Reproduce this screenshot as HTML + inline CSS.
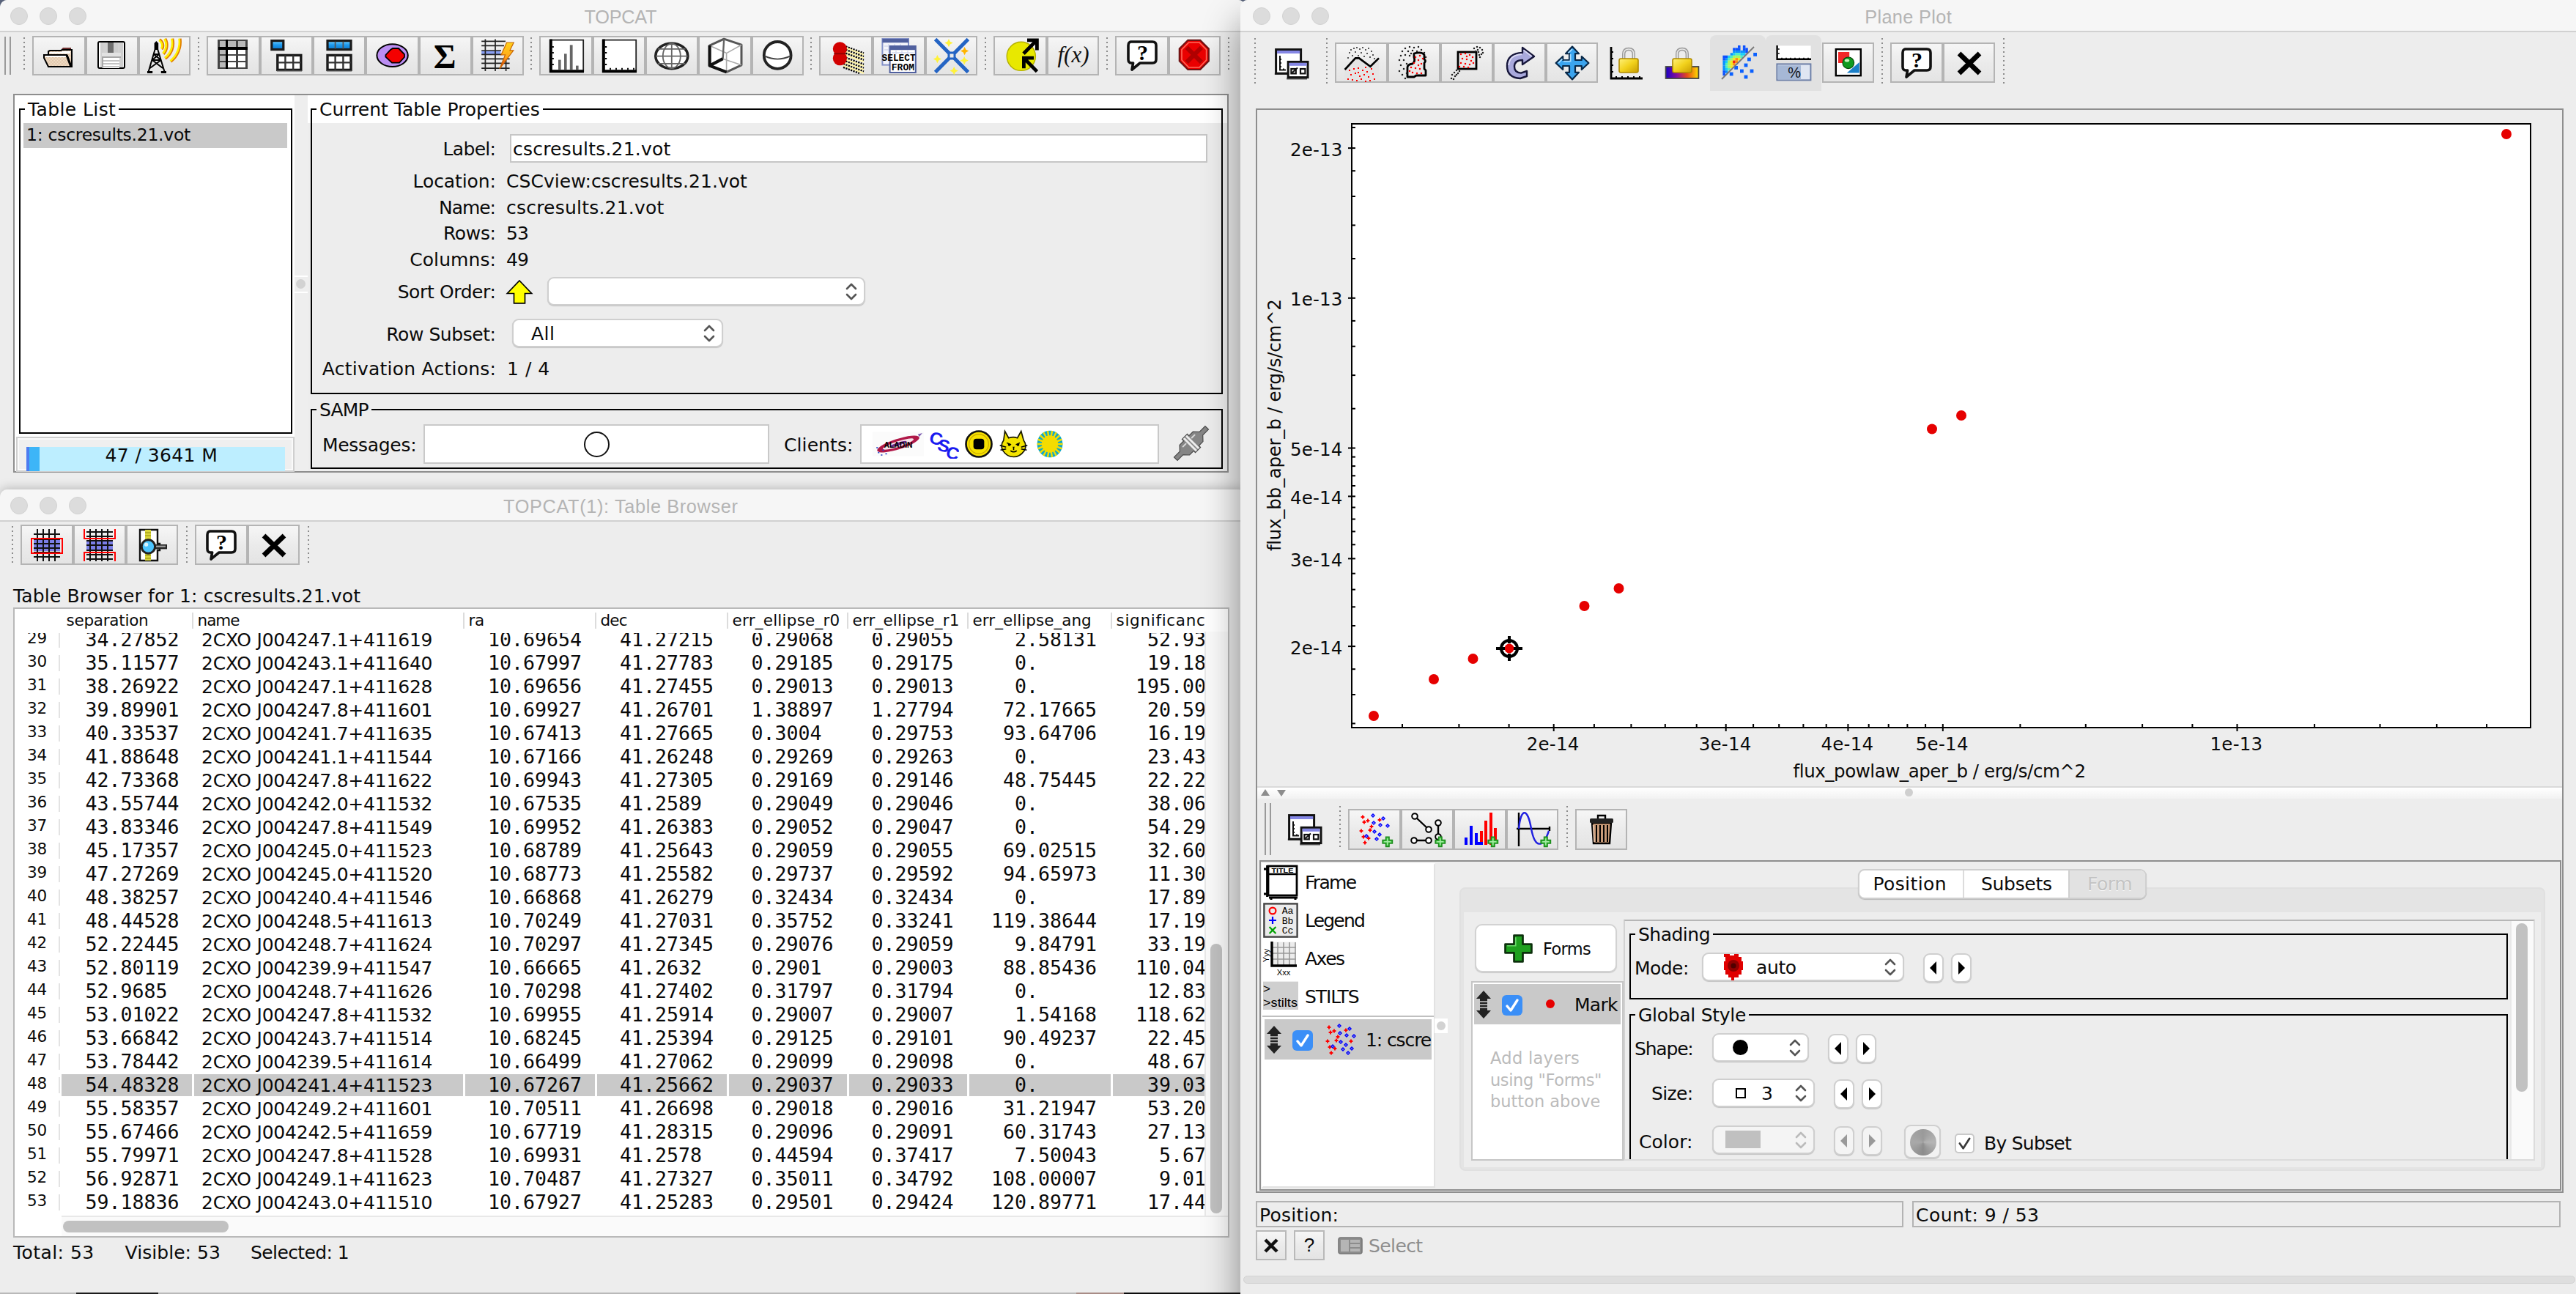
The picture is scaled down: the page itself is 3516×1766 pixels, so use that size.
<!DOCTYPE html><html><head><meta charset='utf-8'><title>TOPCAT</title><style>
*{box-sizing:border-box;margin:0;padding:0}
html,body{width:3516px;height:1766px;background:#59637b}
#root{position:relative;width:3516px;height:1766px;overflow:hidden;background:#59637b;font-family:'DejaVu Sans','Liberation Sans',sans-serif;font-size:25px;color:#0a0a0a}
.a{position:absolute}
.t{position:absolute;white-space:pre;line-height:1}
.win{position:absolute;background:#ededed;overflow:hidden;border-radius:10px 10px 0 0}
.tb{position:absolute;left:0;top:0;right:0;height:44px;background:#f6f6f6;border-bottom:2px solid #d1d1d1}
.tl{position:absolute;width:24px;height:24px;border-radius:50%;background:#dcdcdc;border:1px solid #d2d2d2;top:10px}
.ttl{position:absolute;top:2px;height:42px;line-height:42px;font-family:'Liberation Sans','DejaVu Sans',sans-serif;font-size:25.3px;color:#b4b4b4;text-align:center;white-space:pre}
.btn{position:absolute;border:2px solid #b4b4b4;background:linear-gradient(#f6f6f6,#ebebeb 50%,#e4e4e4)}
.btn svg,.ico svg{position:absolute;left:50%;top:50%;width:48px;height:48px;margin:-24px 0 0 -24px;overflow:visible}
.ico{position:absolute}
.sep{position:absolute;width:2px;background:repeating-linear-gradient(#8c8c8c 0 2px,transparent 2px 6px)}
.grip{position:absolute;width:9px;border-left:2px solid #9a9a9a;border-right:2px solid #9a9a9a}
.grp{position:absolute;border:2px solid #000}
.grp>.gt{position:absolute;left:9px;top:-22px;padding:0 4px;font-size:26px;line-height:36px;white-space:pre}
.lbl{position:absolute;white-space:pre;text-align:right;line-height:32px;height:32px}
.combo{position:absolute;background:#fff;border:2px solid #cfcfcf;border-radius:9px;box-shadow:0 1px 1px rgba(0,0,0,.18)}
.combo .ar{position:absolute;right:8px;top:50%;width:18px;height:28px;margin-top:-14px}
.mono{font-family:'DejaVu Sans Mono','Liberation Mono',monospace;font-size:26.58px}
.mac{font-family:'Liberation Sans','DejaVu Sans',sans-serif}
.sm{position:absolute;background:#fff;border:2px solid #cfcfcf;border-radius:9px;box-shadow:0 1px 1px rgba(0,0,0,.18)}
</style></head><body><div id='root'>
<div class='win' style='left:0;top:0;width:1700px;height:700px'>
<div class='tb'><div class='tl' style='left:14px'></div><div class='tl' style='left:54px'></div><div class='tl' style='left:94px'></div><div class='ttl' style='left:0;width:1694px;letter-spacing:-0.294px;text-indent:-0.294px'>TOPCAT</div></div>
<div class='grip' style='left:6px;top:50px;height:52px'></div>
<div class='sep' style='left:32px;top:51px;height:46px'></div>
<div class='btn' style='left:44px;top:49px;width:73px;height:54px'><svg viewBox='0 0 24 24' ><defs><pattern id='chk' width='1' height='1' patternUnits='userSpaceOnUse'><rect width='1' height='1' fill='#f4e2cc'/><rect width='.5' height='.5' fill='#dcc0a4'/><rect x='.5' y='.5' width='.5' height='.5' fill='#dcc0a4'/></pattern></defs><path d='M13.5 7.5 L14.5 6.5 H20 V8 H13.5Z' fill='#6e2f2f'/><path d='M4.5 10.5 V9 L5.5 8.5 H13 L14 8 H20.5 V19.5 H4.5Z' fill='url(#chk)' stroke='#000' stroke-width='1'/><path d='M5.5 9.5 H13 L14 9 H19.5 V10.5 H5.5Z' fill='#fff'/><path d='M1.5 11.5 H17 L20 19.5 H4.5 L1.5 13.5Z' fill='url(#chk)' stroke='#000' stroke-width='1'/><path d='M2.5 12.5 H16.5' stroke='#fff' stroke-width='1'/><path d='M17 11.5 L20 19.5' stroke='#000' stroke-width='1.6'/></svg></div>
<div class='btn' style='left:117px;top:49px;width:72px;height:54px'><svg viewBox='0 0 24 24' ><rect x='2.5' y='2.5' width='18' height='18' rx='1' fill='#fff' stroke='#000' stroke-width='1'/><rect x='4' y='3' width='2' height='17' fill='#cfcfcf'/><rect x='17' y='3' width='2.5' height='17' fill='#cfcfcf'/><rect x='6' y='3' width='11' height='7' fill='#d2d2d2'/><rect x='9' y='3' width='4' height='7' fill='#6e6e6e'/><rect x='13' y='3.5' width='3' height='6' fill='#cdcdcd'/><rect x='5' y='10' width='13' height='2.5' fill='#e2e2e2'/><rect x='5' y='12.5' width='13' height='1' fill='#a8a8a8'/><rect x='6' y='13.5' width='11' height='7' fill='#fff'/><path d='M6 15.5H17M6 17.5H17M6 19.5H17' stroke='#c4c4c4' stroke-width='1'/><rect x='5' y='13.5' width='1' height='7' fill='#a8a8a8'/></svg></div>
<div class='btn' style='left:189px;top:49px;width:71px;height:54px'><svg viewBox='0 0 24 24' ><path d='M6.2 2 L7.6 3.5 V8 H4.8 V3.5Z' fill='#000'/><path d='M5.2 8 L0.8 23 M7.2 8 L11.8 23 M4.4 11 H8 M3.4 15 L9.4 15 M4.4 11 L9.4 15 M8 11 L3.4 15 M3.4 15 L10.6 20.5 M9.4 15 L1.8 20.5 M0 23.5 H3.5 M9.5 23.5 H13' fill='none' stroke='#000' stroke-width='1'/><path d='M0 22.5H3.6V24H0Z M9.4 22.5H13V24H9.4Z' fill='#000'/><g fill='none' stroke-width='1.3'><path d='M8.5 0.8 A5 5 0 0 1 10.2 7.8' stroke='#e07b00'/><path d='M8 1.4 A4.2 4.2 0 0 1 9.6 7.2' stroke='#ffee00'/><path d='M12.5 0.3 A9 9 0 0 1 11.2 11' stroke='#e07b00'/><path d='M11.7 0.5 A8.2 8.2 0 0 1 10.6 10.4' stroke='#ffee00'/><path d='M17.5 0.3 A13 13 0 0 1 12.4 14.2' stroke='#e07b00'/><path d='M16.6 0.3 A12.2 12.2 0 0 1 11.9 13.5' stroke='#ffee00'/><path d='M22.7 0.3 A17.5 17.5 0 0 1 16.2 16.2' stroke='#e07b00'/><path d='M21.8 0.3 A16.7 16.7 0 0 1 15.7 15.6' stroke='#ffee00'/></g></svg></div>
<div class='btn' style='left:282px;top:49px;width:73px;height:54px'><svg viewBox='0 0 24 24' shape-rendering='crispEdges'><g transform='translate(-0.7 -1)'><rect x='2' y='2' width='20' height='20' fill='#fff'/><rect x='2' y='2' width='20' height='6' fill='#b9b9b9'/><rect x='2' y='2' width='6' height='20' fill='#b9b9b9'/><path d='M2.5 2.5H21.5V21.5H2.5Z M2.5 12.5H21.5 M2.5 17H21.5 M15 2.5V21.5' fill='none' stroke='#444' stroke-width='1.2'/><path d='M2 8H22 M8 2V22' stroke='#000' stroke-width='1.8'/></g></svg></div>
<div class='btn' style='left:355px;top:49px;width:72px;height:54px'><svg viewBox='0 0 24 24' ><defs><linearGradient id='bl' x1='0' y1='0' x2='0' y2='1'><stop offset='0' stop-color='#7ad0ff'/><stop offset='.45' stop-color='#1e9cf0'/><stop offset='1' stop-color='#0a74c8'/></linearGradient></defs><rect x='1.9' y='1.8' width='8' height='6' fill='url(#bl)' stroke='#1a1a1a' stroke-width='1.6'/><rect x='5.9' y='11.7' width='16' height='10' fill='#fff' stroke='#1a1a1a' stroke-width='1.7'/><path d='M5.9 16.7H22 M11.2 11.7V21.7 M16.6 11.7V21.7' stroke='#333' stroke-width='1.2'/><path d='M5.5 22.6H22.5' stroke='#888' stroke-width='0.6'/></svg></div>
<div class='btn' style='left:427px;top:49px;width:72px;height:54px'><svg viewBox='0 0 24 24' ><rect x='4' y='1.8' width='16' height='6' fill='url(#bl)' stroke='#1a1a1a' stroke-width='1.6'/><path d='M9.3 2.4V7.2 M14.7 2.4V7.2' stroke='#555' stroke-width='0.9'/><rect x='4' y='11.7' width='16' height='10' fill='#fff' stroke='#1a1a1a' stroke-width='1.7'/><path d='M4 16.7H20 M9.3 11.7V21.7 M14.7 11.7V21.7' stroke='#333' stroke-width='1.2'/><path d='M3.6 22.6H20.5' stroke='#888' stroke-width='0.6'/></svg></div>
<div class='btn' style='left:499px;top:49px;width:73px;height:54px'><svg viewBox='0 0 24 24' ><ellipse cx='11.8' cy='11.8' rx='10.6' ry='7.7' fill='#bb8ef2' stroke='#000' stroke-width='1'/><path d='M7.2 11.5 L10.5 8 L12 7 H16 L20 11 V13 L16.5 16.8 H11.5 L7.2 12.8 Z' fill='#f40000' stroke='#000' stroke-width='0.9'/></svg></div>
<div class='btn' style='left:572px;top:49px;width:72px;height:54px'><svg viewBox='0 0 24 24' ><text x='11.6' y='20.6' text-anchor='middle' font-family="'Liberation Serif','DejaVu Serif',serif" font-weight='bold' font-size='23.5' fill='#000'>Σ</text></svg></div>
<div class='btn' style='left:644px;top:49px;width:71px;height:54px'><svg viewBox='0 0 24 24' ><rect x='0.6' y='8.6' width='13' height='2.5' fill='#8aa0f4'/><path d='M3.2 0.8V22.5 M10 0.8V22.5 M17.3 12V22.5 M0.6 2.2H17 M0.6 5.2H16 M0.6 8.5H14 M0.6 11.2H14 M0.6 14.2H19.8 M0.6 17.2H19.8 M0.6 20.6H19.8' stroke='#222' stroke-width='0.85' fill='none'/><defs><linearGradient id='lt' x1='0' y1='0' x2='0' y2='1'><stop offset='0' stop-color='#ffd21a'/><stop offset='.55' stop-color='#ffa81a'/><stop offset='1' stop-color='#d81a0a'/></linearGradient></defs><path d='M17.8 3 L22.6 3 L20 8.4 L22.4 8.4 L13 21 L16.8 11.4 L14 11.4 Z' fill='url(#lt)' stroke='#c86400' stroke-width='0.6'/></svg></div>
<div class='btn' style='left:736px;top:49px;width:73px;height:54px'><svg viewBox='0 0 24 24' ><rect x='1.5' y='1.5' width='22' height='21' fill='#fff'/><path d='M1 1.3H23.6V23' fill='none' stroke='#222' stroke-width='0.9'/><path d='M1.4 0.8V22.6H24' fill='none' stroke='#000' stroke-width='2'/><path d='M2.4 6H3.4M2.4 10H3.4M2.4 14H3.4M2.4 18H3.4' stroke='#000' stroke-width='0.9'/><rect x='6.5' y='14.8' width='1.8' height='6.8' fill='#666'/><rect x='10.5' y='10.7' width='1.8' height='10.9' fill='#666'/><rect x='14.4' y='4.7' width='1.9' height='16.9' fill='#666'/><rect x='18.5' y='18.8' width='1.8' height='2.8' fill='#666'/></svg></div>
<div class='btn' style='left:809px;top:49px;width:72px;height:54px'><svg viewBox='0 0 24 24' ><rect x='1.5' y='1.5' width='22' height='21' fill='#fff'/><path d='M1 1.3H23.6V23' fill='none' stroke='#222' stroke-width='0.9'/><path d='M1.4 0.8V22.6H24' fill='none' stroke='#000' stroke-width='2'/><path d='M2.4 6H3.6M2.4 10H3.6M2.4 14H3.6M2.4 18H3.6M6 21.6V20.4M10 21.6V20.4M14 21.6V20.4M18 21.6V20.4M22 21.6V20.4' stroke='#000' stroke-width='0.9'/></svg></div>
<div class='btn' style='left:881px;top:49px;width:72px;height:54px'><svg viewBox='0 0 24 24' ><ellipse cx='11.9' cy='12.2' rx='11' ry='8.6' fill='#fff' stroke='#222' stroke-width='1.8'/><path d='M11.9 3.6V20.8 M1 12.3H22.8 M2.6 7.4H21.2 M2.6 17.4H21.2' stroke='#666' stroke-width='0.9' fill='none'/><ellipse cx='11.9' cy='12.2' rx='6' ry='8.4' fill='none' stroke='#666' stroke-width='0.9'/></svg></div>
<div class='btn' style='left:953px;top:49px;width:73px;height:54px'><svg viewBox='0 0 24 24' ><path d='M11.1 0.6 L23 4.6 V18.4 L12.8 23.2 L1.3 18.8 V5.1 Z' fill='#fff' stroke='#555' stroke-width='1.5' stroke-linejoin='round'/><path d='M12.8 10.3 L1.3 5.1 M12.8 10.3 L23 4.6 M12.8 10.3 V23.2 M10.3 14.1 L23 18.4' fill='none' stroke='#aaa' stroke-width='0.8'/><path d='M11.1 0.6 L10.3 14.1' fill='none' stroke='#666' stroke-width='1.2'/><path d='M1.3 5 V18.8 L12.8 23.2 M1.3 18.8 L10.3 14.1' fill='none' stroke='#111' stroke-width='2.1' stroke-linejoin='round'/></svg></div>
<div class='btn' style='left:1026px;top:49px;width:71px;height:54px'><svg viewBox='0 0 24 24' ><circle cx='11.6' cy='11.7' r='9.2' fill='#fff' stroke='#222' stroke-width='1.9'/><path d='M2.8 12.2 Q11.6 16.4 20.4 12.2' fill='none' stroke='#444' stroke-width='0.9'/></svg></div>
<div class='btn' style='left:1118px;top:49px;width:73px;height:54px'><svg viewBox='0 0 24 24' ><g stroke-width='1.15' fill='none'><path d='M10 6.1 L24 11.3 M10 8.5 L24 13.7 M10 10.9 L24 16.1' stroke='#fff4a8'/><path d='M10 13.9 L24 19.1 M10 16.3 L24 21.5 M10 18.7 L24 23.9' stroke='#fff4a8'/><path d='M10 7.3 L24 12.5 M10 9.7 L24 14.9 M10 5 L24 10.2' stroke='#000' stroke-dasharray='1.1 0.7'/><path d='M10 15.1 L24 20.3 M10 17.5 L24 22.7 M10 12.7 L24 17.9 M10 19.9 L21 24' stroke='#000' stroke-dasharray='1.1 0.7'/></g><circle cx='7.7' cy='7.4' r='4.8' fill='#d20000'/><circle cx='7.7' cy='13.8' r='4.8' fill='#d20000'/><rect x='3.6' y='10.2' width='8' height='0.9' fill='#900000'/></svg></div>
<div class='btn' style='left:1191px;top:49px;width:72px;height:54px'><svg viewBox='0 0 24 24' ><rect x='0.7' y='0.5' width='17.8' height='17.8' fill='#f4f5fb' stroke='#8492c8' stroke-width='1'/><rect x='0.7' y='0.5' width='17.8' height='2.6' fill='#50609e'/><path d='M2 5.5H17M2 8H17M5 4V10M9 4V10M13 4V10' stroke='#d4d9ee' stroke-width='0.7'/><rect x='5.8' y='5.5' width='17.6' height='18' fill='#fff' stroke='#50609e' stroke-width='1'/><rect x='5.8' y='5.5' width='17.6' height='2.6' fill='#50609e'/><path d='M7 10H22M10 8.5V11M14 8.5V11M18 8.5V11' stroke='#d4d9ee' stroke-width='0.7'/><text x='0.3' y='15.3' font-family="'Liberation Mono','DejaVu Sans Mono',monospace" font-weight='bold' font-size='6.4' textLength='23' lengthAdjust='spacingAndGlyphs' fill='#000'>SELECT</text><text x='6.9' y='21.8' font-family="'Liberation Mono','DejaVu Sans Mono',monospace" font-weight='bold' font-size='6.4' textLength='15.6' lengthAdjust='spacingAndGlyphs' fill='#000'>FROM</text></svg></div>
<div class='btn' style='left:1263px;top:49px;width:71px;height:54px'><svg viewBox='0 0 24 24' ><g fill='#fff23a'><path d='M10 0.5l.9 1.9 1.9.9-1.9.9-.9 1.9-.9-1.9-1.9-.9 1.9-.9z M2.2 11.5l.9 1.9 1.9.9-1.9.9-.9 1.9-.9-1.9-1.9-.9 1.9-.9z M20.6 12.5l.9 1.9 1.9.9-1.9.9-.9 1.9-.9-1.9-1.9-.9 1.9-.9z M13.6 19.5l.9 1.9 1.9.9-1.9.9-.9 1.9-.9-1.9-1.9-.9 1.9-.9z'/></g><path d='M20.8 6l.9 1.9 1.9.9-1.9.9-.9 1.9-.9-1.9-1.9-.9 1.9-.9z' fill='#ffb400'/><path d='M0.8 0.8 L10.2 10.2 M13.8 13.8 L23.2 23.2 M23.2 0.8 L13.8 10.2 M10.2 13.8 L0.8 23.2' fill='none' stroke='#2464c4' stroke-width='2.5'/><rect x='10' y='10' width='4' height='4' fill='none' stroke='#2464c4' stroke-width='1.5'/></svg></div>
<div class='btn' style='left:1356px;top:49px;width:73px;height:54px'><svg viewBox='0 0 24 24' ><circle cx='12.4' cy='12.4' r='9.8' fill='#e8e800' stroke='#b4b000' stroke-width='0.7'/><path d='M14 10.6 L22.5 2 M16.5 1.4 H23.2 V8.2' fill='none' stroke='#000' stroke-width='2.4'/><path d='M23.2 22.8 L15 14.4 M14.2 20.6 V13.6 H21' fill='none' stroke='#000' stroke-width='2.4'/></svg></div>
<div class='btn' style='left:1429px;top:49px;width:71px;height:54px'><svg viewBox='0 0 24 24' ><text x='12' y='16.5' text-anchor='middle' font-family="'Liberation Serif','DejaVu Serif',serif" font-style='italic' font-size='15.5' fill='#111'>f(x)</text></svg></div>
<div class='btn' style='left:1522px;top:49px;width:73px;height:54px'><svg viewBox='0 0 24 24' ><path d='M4 2.5 H19 Q21.5 2.5 21.5 5 V14.5 Q21.5 17 19 17 H10.5 L5 21.5 L5.8 17 H4.5 Q2.5 17 2.5 14.5 V5 Q2.5 2.5 4.5 2.5Z' fill='#fff' stroke='#111' stroke-width='1.8' stroke-linejoin='round'/><text x='12.2' y='15' text-anchor='middle' font-family="'Liberation Serif','DejaVu Serif',serif" font-weight='bold' font-size='15' fill='#000'>?</text></svg></div>
<div class='btn' style='left:1595px;top:49px;width:71px;height:54px'><svg viewBox='0 0 24 24' ><path d='M7.2 1.4 H15.6 L21.4 7.2 V15.6 L15.6 21.5 H7.2 L1.4 15.6 V7.2Z' fill='#ea0000' stroke='#6e1414' stroke-width='1.1'/><path d='M7.8 3H15L19.8 7.8V15L15 20H7.8L3 15V7.8Z' fill='none' stroke='#ff6a5a' stroke-width='0.8'/><path d='M6.4 6.4 L16.4 16.4 M16.4 6.4 L6.4 16.4' stroke='#b00000' stroke-width='3'/></svg></div>
<div class='sep' style='left:270px;top:51px;height:46px'></div>
<div class='sep' style='left:724px;top:51px;height:46px'></div>
<div class='sep' style='left:1106px;top:51px;height:46px'></div>
<div class='sep' style='left:1344px;top:51px;height:46px'></div>
<div class='sep' style='left:1510px;top:51px;height:46px'></div>
<div class='sep' style='left:1676px;top:51px;height:46px'></div>
<div class='a' style='left:18px;top:128px;width:1659px;height:517px;background:#fff;border:2px solid #8e8e8e'></div>
<div class='a' style='left:402px;top:130px;width:18px;height:513px;background:#eeeeee'></div>
<div class='a' style='left:404px;top:381px;width:13px;height:13px;border-radius:50%;background:#d2d2d2'></div>
<div class='a' style='left:402px;top:376px;width:18px;height:2px;background:#fff'></div><div class='a' style='left:402px;top:398px;width:18px;height:2px;background:#fff'></div>
<div class='grp' style='left:26px;top:148px;width:373px;height:444px'></div><div class='t' style='left:38px;top:137px;font-size:25px;letter-spacing:0.400px;background:#fff;padding:0 4px;margin-left:-4px;'>Table List</div>
<div class='a' style='left:32px;top:168px;width:360px;height:34px;background:#c9c9c9'></div>
<div class='t' style='left:36px;top:173px;font-size:23.5px;letter-spacing:-0.275px;'>1: cscresults.21.vot</div>
<div class='a' style='left:22px;top:596px;width:380px;height:48px;background:#efefef;border:2px solid #cfcfcf;box-shadow:inset 0 0 0 2px #fafafa'></div>
<div class='a' style='left:36px;top:610px;width:353px;height:33px;background:#bdeeff'></div>
<div class='a' style='left:36px;top:610px;width:18px;height:33px;background:#3db5f7'></div>
<div class='a' style='left:36px;top:610px;width:4px;height:33px;background:#4d7cf0'></div>
<div class='t' style='left:143.5px;top:609px;font-size:25px;letter-spacing:0.402px;'>47 / 3641 M</div>
<div class='a' style='left:420px;top:168px;width:1255px;height:475px;background:#ededed'></div>
<div class='grp' style='left:424px;top:148px;width:1245px;height:390px'></div><div class='t' style='left:436px;top:137px;font-size:25px;letter-spacing:-0.003px;background:#fff;padding:0 4px;margin-left:-4px;'>Current Table Properties</div>
<div class='a' style='left:696px;top:183px;width:952px;height:39px;background:#fff;border:2px solid #c6c6c6'></div>
<div class='t' style='right:calc(100% - 677px);top:191px;font-size:25px;letter-spacing:-0.696px;margin-right:0.696px;'>Label:</div>
<div class='t' style='left:700px;top:191px;font-size:25px;letter-spacing:0.213px;'>cscresults.21.vot</div>
<div class='t' style='right:calc(100% - 677px);top:235px;font-size:25px;letter-spacing:-0.086px;margin-right:0.086px;'>Location:</div>
<div class='t' style='left:691px;top:235px;font-size:25px;letter-spacing:0.069px;'>CSCview:cscresults.21.vot</div>
<div class='t' style='right:calc(100% - 677px);top:271px;font-size:25px;letter-spacing:-1.057px;margin-right:1.057px;'>Name:</div>
<div class='t' style='left:691px;top:271px;font-size:25px;letter-spacing:0.213px;'>cscresults.21.vot</div>
<div class='t' style='right:calc(100% - 677px);top:306px;font-size:25px;letter-spacing:-0.347px;margin-right:0.347px;'>Rows:</div>
<div class='t' style='left:691px;top:306px;font-size:25px;letter-spacing:-0.906px;'>53</div>
<div class='t' style='right:calc(100% - 677px);top:342px;font-size:25px;letter-spacing:0.089px;margin-right:-0.089px;'>Columns:</div>
<div class='t' style='left:691px;top:342px;font-size:25px;letter-spacing:-0.906px;'>49</div>
<div class='t' style='right:calc(100% - 677px);top:386px;font-size:25px;letter-spacing:-0.385px;margin-right:0.385px;'>Sort Order:</div>
<div class='a' style='left:689px;top:378px;width:40px;height:40px'><svg width='40' height='40' viewBox='0 0 24 24' ><path d='M12 3 L22 13.5 H16.5 V21.5 H7.5 V13.5 H2 Z' fill='#ffff00' stroke='#000' stroke-width='1' stroke-linejoin='miter'/></svg></div>
<div class='combo' style='left:747px;top:378px;width:434px;height:39px;background:#fff'><svg class='ar' viewBox='0 0 18 28'><path d='M3 10 L9 4 L15 10 M3 18 L9 24 L15 18' fill='none' stroke='#555' stroke-width='2.6' stroke-linecap='round' stroke-linejoin='round'/></svg></div>
<div class='t' style='right:calc(100% - 677px);top:444px;font-size:25px;letter-spacing:-0.441px;margin-right:0.441px;'>Row Subset:</div>
<div class='combo' style='left:699px;top:435px;width:288px;height:39px;background:#fff'><div class='t' style='left:24px;top:6px;font-size:25px;letter-spacing:0.500px;'>All</div><svg class='ar' viewBox='0 0 18 28'><path d='M3 10 L9 4 L15 10 M3 18 L9 24 L15 18' fill='none' stroke='#555' stroke-width='2.6' stroke-linecap='round' stroke-linejoin='round'/></svg></div>
<div class='t' style='right:calc(100% - 677px);top:491px;font-size:25px;letter-spacing:0.239px;margin-right:-0.239px;'>Activation Actions:</div>
<div class='t' style='left:692px;top:491px;font-size:25px;letter-spacing:0.532px;'>1 / 4</div>
<div class='grp' style='left:424px;top:558px;width:1245px;height:82px'></div><div class='t' style='left:436px;top:547px;font-size:25px;letter-spacing:-0.873px;background:#ededed;padding:0 4px;margin-left:-4px;'>SAMP</div>
<div class='t' style='left:440px;top:595px;font-size:25px;letter-spacing:-0.303px;'>Messages:</div>
<div class='a' style='left:578px;top:579px;width:472px;height:54px;background:#fff;border:2px solid #c9c9c9'></div>
<div class='a' style='left:797px;top:589px;width:35px;height:35px;border-radius:50%;border:2px solid #111'></div>
<div class='t' style='left:1070px;top:595px;font-size:25px;letter-spacing:0.096px;'>Clients:</div>
<div class='a' style='left:1174px;top:579px;width:408px;height:54px;background:#fff;border:2px solid #c9c9c9'></div>
<div class='a' style='left:1191px;top:586px;width:70px;height:40px'><svg width='70' height='40' preserveAspectRatio='none' viewBox='0 0 34 24'><rect x='0' y='2' width='34' height='20' fill='#fbfbfb'/><ellipse cx='17' cy='12' rx='15' ry='4.2' transform='rotate(-22 17 12)' fill='#b01848'/><ellipse cx='17' cy='12' rx='11' ry='2.2' transform='rotate(-22 17 12)' fill='#f6e4ea'/><ellipse cx='17' cy='12' rx='6' ry='1.2' transform='rotate(-22 17 12)' fill='#6a2a8a'/><path d='M30 4 L33 3 L31 6Z' fill='#7a5ab0'/><rect x='3.50' y='18.50' width='1.0' height='1.0' fill='#2a4ac8'/><rect x='5.50' y='20.50' width='1.0' height='1.0' fill='#2a4ac8'/><rect x='8.50' y='19.50' width='1.0' height='1.0' fill='#2a4ac8'/><rect x='2.50' y='14.50' width='1.0' height='1.0' fill='#2a4ac8'/><rect x='6.50' y='16.50' width='1.0' height='1.0' fill='#2a4ac8'/><text x='17' y='15.2' text-anchor='middle' font-family="'Liberation Sans','DejaVu Sans',sans-serif" font-weight='bold' font-size='6.2' textLength='19' lengthAdjust='spacingAndGlyphs' fill='#000'>ALADIN</text></svg></div>
<div class='a' style='left:1267px;top:586px;width:42px;height:40px'><svg width='42' height='40' preserveAspectRatio='none' viewBox='0 0 24 24' ><text x='0' y='11' font-family="'Liberation Sans','DejaVu Sans',sans-serif" font-weight='bold' font-size='14' fill='#1a1af0' transform='rotate(14 0 11)'>C</text><text x='6.5' y='17' font-family="'Liberation Sans','DejaVu Sans',sans-serif" font-weight='bold' font-size='14' fill='#1a1af0' transform='rotate(14 6.5 17)'>S</text><text x='13' y='23' font-family="'Liberation Sans','DejaVu Sans',sans-serif" font-weight='bold' font-size='14' fill='#1a1af0' transform='rotate(14 13 23)'>C</text></svg></div>
<div class='a' style='left:1316px;top:586px;width:40px;height:40px'><svg width='40' height='40' preserveAspectRatio='none' viewBox='0 0 24 24' ><circle cx='12' cy='12' r='10.5' fill='#f6e000' stroke='#111' stroke-width='1.6'/><rect x='7.6' y='7.6' width='8.8' height='8.8' rx='2.4' fill='#000'/><circle cx='12' cy='12' r='8' fill='none' stroke='#c8a800' stroke-width='0.7'/></svg></div>
<div class='a' style='left:1363px;top:586px;width:41px;height:40px'><svg width='41' height='40' preserveAspectRatio='none' viewBox='0 0 24 24' ><path d='M5 1.5 L8 7 Q12 5.8 15 7 L18 1.5 L20 9 Q23 13 20.5 17.5 Q17 22.5 12 22.5 Q6.5 22.5 3.5 17.5 Q1 13 4 9 Z' fill='#f4e400' stroke='#1a1a00' stroke-width='1'/><path d='M6.5 11 L10 12.5 M17 11 L13.8 12.5 M9.5 17.5 Q12 19.5 14.5 17.5 M12 15 V17 M1 13 L6 14.5 M1.5 17 L6 16 M23 13 L18 14.5 M22.5 17 L18 16' fill='none' stroke='#000' stroke-width='0.9'/><circle cx='8.5' cy='12.6' r='1.1' fill='#000'/><circle cx='15.5' cy='12.6' r='1.1' fill='#000'/><path d='M11 14.2h2l-1 1.3z' fill='#000'/></svg></div>
<div class='a' style='left:1414px;top:586px;width:38px;height:40px'><svg width='38' height='40' preserveAspectRatio='none' viewBox='0 0 24 24' ><circle cx='12' cy='12' r='11' fill='#10a8c8'/><path d='M12 12 L23.00 12.00' stroke='#f4dc00' stroke-width='1.5'/><path d='M12 12 L22.34 15.76' stroke='#f4dc00' stroke-width='1.5'/><path d='M12 12 L20.43 19.07' stroke='#f4dc00' stroke-width='1.5'/><path d='M12 12 L17.50 21.53' stroke='#f4dc00' stroke-width='1.5'/><path d='M12 12 L13.91 22.83' stroke='#f4dc00' stroke-width='1.5'/><path d='M12 12 L10.09 22.83' stroke='#f4dc00' stroke-width='1.5'/><path d='M12 12 L6.50 21.53' stroke='#f4dc00' stroke-width='1.5'/><path d='M12 12 L3.57 19.07' stroke='#f4dc00' stroke-width='1.5'/><path d='M12 12 L1.66 15.76' stroke='#f4dc00' stroke-width='1.5'/><path d='M12 12 L1.00 12.00' stroke='#f4dc00' stroke-width='1.5'/><path d='M12 12 L1.66 8.24' stroke='#f4dc00' stroke-width='1.5'/><path d='M12 12 L3.57 4.93' stroke='#f4dc00' stroke-width='1.5'/><path d='M12 12 L6.50 2.47' stroke='#f4dc00' stroke-width='1.5'/><path d='M12 12 L10.09 1.17' stroke='#f4dc00' stroke-width='1.5'/><path d='M12 12 L13.91 1.17' stroke='#f4dc00' stroke-width='1.5'/><path d='M12 12 L17.50 2.47' stroke='#f4dc00' stroke-width='1.5'/><path d='M12 12 L20.43 4.93' stroke='#f4dc00' stroke-width='1.5'/><path d='M12 12 L22.34 8.24' stroke='#f4dc00' stroke-width='1.5'/><circle cx='12' cy='12' r='7' fill='#f4dc00'/></svg></div>
<div class='ico' style='left:1602px;top:581px;width:48px;height:48px'><svg viewBox='0 0 24 24' ><g transform='rotate(-45 12 12)'><path d='M-3 10.4 H2.5 L5.5 7.2 H9.5 V5.6 H14.5 V7.2 H18.5 L21.5 10.4 H27 V13.6 H21.5 L18.5 16.8 H14.5 V18.4 H9.5 V16.8 H5.5 L2.5 13.6 H-3Z' fill='#858585' stroke='#4a4a4a' stroke-width='0.6'/><path d='M6 9.6H9.5M14.5 9.6H18' stroke='#d8d8d8' stroke-width='1'/><rect x='10.1' y='5.9' width='1.5' height='12.2' fill='#ececec'/><rect x='12.4' y='5.9' width='1.5' height='12.2' fill='#ececec'/></g></svg></div>
</div>
<div class='win' style='left:0;top:668px;width:1700px;height:1098px;box-shadow:0 -2px 14px rgba(0,0,0,.22)'>
<div class='tb'><div class='tl' style='left:14px'></div><div class='tl' style='left:54px'></div><div class='tl' style='left:94px'></div><div class='ttl' style='left:0;width:1694px;letter-spacing:0.643px;text-indent:0.643px'>TOPCAT(1): Table Browser</div></div>
<div class='sep' style='left:16px;top:50px;height:51px'></div>
<div class='btn' style='left:28px;top:48px;width:72px;height:55px'><svg viewBox='0 0 24 24' shape-rendering='crispEdges'><rect x='3' y='8.5' width='18' height='7.5' fill='#7b7fe8'/><path d='M5.5 1V23 M9.5 1V23 M13.5 1V23 M17.5 1V23 M3 4.5H21 M3 8H21 M3 11H21 M3 14H21 M3 17H21 M3 20H21' stroke='#111' stroke-width='0.9' fill='none'/><rect x='1.5' y='7.5' width='21' height='10' fill='none' stroke='#f00' stroke-width='1'/></svg></div>
<div class='btn' style='left:100px;top:48px;width:72px;height:55px'><svg viewBox='0 0 24 24' shape-rendering='crispEdges'><rect x='3' y='9' width='18' height='6.5' fill='#7b7fe8'/><path d='M5.5 1V23 M9.5 1V23 M13.5 1V23 M17.5 1V23 M3 3H21 M3 6H21 M3 9H21 M3 12H21 M3 15.5H21 M3 18.5H21 M3 21.5H21' stroke='#111' stroke-width='0.9' fill='none'/><path d='M1.5 1V7.5H22.5V1 M1.5 23V17H22.5V23' fill='none' stroke='#f00' stroke-width='1'/></svg></div>
<div class='btn' style='left:172px;top:48px;width:71px;height:55px'><svg viewBox='0 0 24 24' ><path d='M3.5 1.5 H15.5 V11 H17 V15.5 H15.5 V22.5 H3.5Z' fill='#fff' stroke='#111' stroke-width='1.2'/><rect x='7' y='1.5' width='4' height='7' fill='#d9d53a'/><rect x='7' y='17' width='4' height='5.5' fill='#d9d53a'/><path d='M7 3.5H11M7 5.5H11M7 19H11M7 21H11' stroke='#a8a41a' stroke-width='0.7'/><rect x='13' y='11.5' width='9' height='3.2' fill='#222'/><rect x='14' y='12.3' width='7' height='1.2' fill='#999'/><circle cx='9.2' cy='13' r='4.6' fill='#4cc4ff' stroke='#222' stroke-width='1.5'/><circle cx='7.8' cy='11.6' r='1.3' fill='#d8f4ff'/></svg></div>
<div class='sep' style='left:254px;top:50px;height:51px'></div>
<div class='btn' style='left:266px;top:48px;width:72px;height:55px'><svg viewBox='0 0 24 24' ><path d='M4 2.5 H19 Q21.5 2.5 21.5 5 V14.5 Q21.5 17 19 17 H10.5 L5 21.5 L5.8 17 H4.5 Q2.5 17 2.5 14.5 V5 Q2.5 2.5 4.5 2.5Z' fill='#fff' stroke='#111' stroke-width='1.8' stroke-linejoin='round'/><text x='12.2' y='15' text-anchor='middle' font-family="'Liberation Serif','DejaVu Serif',serif" font-weight='bold' font-size='15' fill='#000'>?</text></svg></div>
<div class='btn' style='left:338px;top:48px;width:71px;height:55px'><svg viewBox='0 0 24 24' ><path d='M5 5.5 L19 19 M19 5.5 L5 19' stroke='#000' stroke-width='3.4'/></svg></div>
<div class='sep' style='left:420px;top:50px;height:51px'></div>
<div class='t' style='left:18px;top:133px;font-size:25px;letter-spacing:0.155px;'>Table Browser for 1: cscresults.21.vot</div>
<div class='a' style='left:18px;top:161px;width:1660px;height:860px;background:#fff;border:2px solid #b9b9b9'></div>
<div class='a' style='left:20px;top:163px;width:1624px;height:828px;overflow:hidden'>
<div class='t' style='left:70.5px;top:5px;font-size:21.5px;letter-spacing:-0.245px;'>separation</div>
<div class='t' style='left:249.5px;top:5px;font-size:21.5px;letter-spacing:-0.996px;'>name</div>
<div class='a' style='left:242px;top:5px;width:2px;height:22px;background:#dcdcdc'></div>
<div class='t' style='left:619.5px;top:5px;font-size:21.5px;letter-spacing:-0.258px;'>ra</div>
<div class='a' style='left:612px;top:5px;width:2px;height:22px;background:#dcdcdc'></div>
<div class='t' style='left:799.5px;top:5px;font-size:21.5px;letter-spacing:-0.834px;'>dec</div>
<div class='a' style='left:792px;top:5px;width:2px;height:22px;background:#dcdcdc'></div>
<div class='t' style='left:979.5px;top:5px;font-size:21.5px;letter-spacing:0.230px;'>err_ellipse_r0</div>
<div class='a' style='left:972px;top:5px;width:2px;height:22px;background:#dcdcdc'></div>
<div class='t' style='left:1143.5px;top:5px;font-size:21.5px;letter-spacing:0.158px;'>err_ellipse_r1</div>
<div class='a' style='left:1136px;top:5px;width:2px;height:22px;background:#dcdcdc'></div>
<div class='t' style='left:1307.5px;top:5px;font-size:21.5px;letter-spacing:0.040px;'>err_ellipse_ang</div>
<div class='a' style='left:1300px;top:5px;width:2px;height:22px;background:#dcdcdc'></div>
<div class='t' style='left:1503.5px;top:5px;font-size:21.5px;letter-spacing:0.697px;'>significance</div>
<div class='a' style='left:1496px;top:5px;width:2px;height:22px;background:#dcdcdc'></div>
<div class='a' style='left:0;top:31px;width:1624px;height:797px;overflow:hidden'>
<div class='t' style='left:17px;top:-2px;font-size:21.5px;letter-spacing:-.2px'>29</div>
<div class='a' style='left:60px;top:0px;width:2px;height:22px;background:#e3e3e3'></div>
<div class='t mono' style='right:1399.5px;top:-5px;line-height:32px'>34.27852</div>
<div class='t' style='left:255px;top:-1px;font-size:25px;letter-spacing:-0.203px;'>2CXO J004247.1+411619</div>
<div class='t mono' style='right:850.0px;top:-5px;line-height:32px'>10.69654</div>
<div class='t mono' style='right:670.0px;top:-5px;line-height:32px'>41.27215</div>
<div class='t mono' style='right:506.5px;top:-5px;line-height:32px'>0.29068</div>
<div class='t mono' style='right:342.5px;top:-5px;line-height:32px'>0.29055</div>
<div class='t mono' style='right:147.0px;top:-5px;line-height:32px'>2.58131</div>
<div class='t mono' style='right:-2.0px;top:-5px;line-height:32px'>52.93</div>
<div class='t' style='left:17px;top:30px;font-size:21.5px;letter-spacing:-.2px'>30</div>
<div class='a' style='left:60px;top:32px;width:2px;height:22px;background:#e3e3e3'></div>
<div class='t mono' style='right:1399.5px;top:27px;line-height:32px'>35.11577</div>
<div class='t' style='left:255px;top:31px;font-size:25px;letter-spacing:-0.203px;'>2CXO J004243.1+411640</div>
<div class='t mono' style='right:850.0px;top:27px;line-height:32px'>10.67997</div>
<div class='t mono' style='right:670.0px;top:27px;line-height:32px'>41.27783</div>
<div class='t mono' style='right:506.5px;top:27px;line-height:32px'>0.29185</div>
<div class='t mono' style='right:342.5px;top:27px;line-height:32px'>0.29175</div>
<div class='t mono' style='right:227.0px;top:27px;line-height:32px'>0.</div>
<div class='t mono' style='right:-2.0px;top:27px;line-height:32px'>19.18</div>
<div class='t' style='left:17px;top:62px;font-size:21.5px;letter-spacing:-.2px'>31</div>
<div class='a' style='left:60px;top:64px;width:2px;height:22px;background:#e3e3e3'></div>
<div class='t mono' style='right:1399.5px;top:59px;line-height:32px'>38.26922</div>
<div class='t' style='left:255px;top:63px;font-size:25px;letter-spacing:-0.203px;'>2CXO J004247.1+411628</div>
<div class='t mono' style='right:850.0px;top:59px;line-height:32px'>10.69656</div>
<div class='t mono' style='right:670.0px;top:59px;line-height:32px'>41.27455</div>
<div class='t mono' style='right:506.5px;top:59px;line-height:32px'>0.29013</div>
<div class='t mono' style='right:342.5px;top:59px;line-height:32px'>0.29013</div>
<div class='t mono' style='right:227.0px;top:59px;line-height:32px'>0.</div>
<div class='t mono' style='right:-2.0px;top:59px;line-height:32px'>195.00</div>
<div class='t' style='left:17px;top:94px;font-size:21.5px;letter-spacing:-.2px'>32</div>
<div class='a' style='left:60px;top:96px;width:2px;height:22px;background:#e3e3e3'></div>
<div class='t mono' style='right:1399.5px;top:91px;line-height:32px'>39.89901</div>
<div class='t' style='left:255px;top:95px;font-size:25px;letter-spacing:-0.203px;'>2CXO J004247.8+411601</div>
<div class='t mono' style='right:850.0px;top:91px;line-height:32px'>10.69927</div>
<div class='t mono' style='right:670.0px;top:91px;line-height:32px'>41.26701</div>
<div class='t mono' style='right:506.5px;top:91px;line-height:32px'>1.38897</div>
<div class='t mono' style='right:342.5px;top:91px;line-height:32px'>1.27794</div>
<div class='t mono' style='right:147.0px;top:91px;line-height:32px'>72.17665</div>
<div class='t mono' style='right:-2.0px;top:91px;line-height:32px'>20.59</div>
<div class='t' style='left:17px;top:126px;font-size:21.5px;letter-spacing:-.2px'>33</div>
<div class='a' style='left:60px;top:128px;width:2px;height:22px;background:#e3e3e3'></div>
<div class='t mono' style='right:1399.5px;top:123px;line-height:32px'>40.33537</div>
<div class='t' style='left:255px;top:127px;font-size:25px;letter-spacing:-0.203px;'>2CXO J004241.7+411635</div>
<div class='t mono' style='right:850.0px;top:123px;line-height:32px'>10.67413</div>
<div class='t mono' style='right:670.0px;top:123px;line-height:32px'>41.27665</div>
<div class='t mono' style='right:522.5px;top:123px;line-height:32px'>0.3004</div>
<div class='t mono' style='right:342.5px;top:123px;line-height:32px'>0.29753</div>
<div class='t mono' style='right:147.0px;top:123px;line-height:32px'>93.64706</div>
<div class='t mono' style='right:-2.0px;top:123px;line-height:32px'>16.19</div>
<div class='t' style='left:17px;top:158px;font-size:21.5px;letter-spacing:-.2px'>34</div>
<div class='a' style='left:60px;top:160px;width:2px;height:22px;background:#e3e3e3'></div>
<div class='t mono' style='right:1399.5px;top:155px;line-height:32px'>41.88648</div>
<div class='t' style='left:255px;top:159px;font-size:25px;letter-spacing:-0.203px;'>2CXO J004241.1+411544</div>
<div class='t mono' style='right:850.0px;top:155px;line-height:32px'>10.67166</div>
<div class='t mono' style='right:670.0px;top:155px;line-height:32px'>41.26248</div>
<div class='t mono' style='right:506.5px;top:155px;line-height:32px'>0.29269</div>
<div class='t mono' style='right:342.5px;top:155px;line-height:32px'>0.29263</div>
<div class='t mono' style='right:227.0px;top:155px;line-height:32px'>0.</div>
<div class='t mono' style='right:-2.0px;top:155px;line-height:32px'>23.43</div>
<div class='t' style='left:17px;top:190px;font-size:21.5px;letter-spacing:-.2px'>35</div>
<div class='a' style='left:60px;top:192px;width:2px;height:22px;background:#e3e3e3'></div>
<div class='t mono' style='right:1399.5px;top:187px;line-height:32px'>42.73368</div>
<div class='t' style='left:255px;top:191px;font-size:25px;letter-spacing:-0.203px;'>2CXO J004247.8+411622</div>
<div class='t mono' style='right:850.0px;top:187px;line-height:32px'>10.69943</div>
<div class='t mono' style='right:670.0px;top:187px;line-height:32px'>41.27305</div>
<div class='t mono' style='right:506.5px;top:187px;line-height:32px'>0.29169</div>
<div class='t mono' style='right:342.5px;top:187px;line-height:32px'>0.29146</div>
<div class='t mono' style='right:147.0px;top:187px;line-height:32px'>48.75445</div>
<div class='t mono' style='right:-2.0px;top:187px;line-height:32px'>22.22</div>
<div class='t' style='left:17px;top:222px;font-size:21.5px;letter-spacing:-.2px'>36</div>
<div class='a' style='left:60px;top:224px;width:2px;height:22px;background:#e3e3e3'></div>
<div class='t mono' style='right:1399.5px;top:219px;line-height:32px'>43.55744</div>
<div class='t' style='left:255px;top:223px;font-size:25px;letter-spacing:-0.203px;'>2CXO J004242.0+411532</div>
<div class='t mono' style='right:850.0px;top:219px;line-height:32px'>10.67535</div>
<div class='t mono' style='right:686.0px;top:219px;line-height:32px'>41.2589</div>
<div class='t mono' style='right:506.5px;top:219px;line-height:32px'>0.29049</div>
<div class='t mono' style='right:342.5px;top:219px;line-height:32px'>0.29046</div>
<div class='t mono' style='right:227.0px;top:219px;line-height:32px'>0.</div>
<div class='t mono' style='right:-2.0px;top:219px;line-height:32px'>38.06</div>
<div class='t' style='left:17px;top:254px;font-size:21.5px;letter-spacing:-.2px'>37</div>
<div class='a' style='left:60px;top:256px;width:2px;height:22px;background:#e3e3e3'></div>
<div class='t mono' style='right:1399.5px;top:251px;line-height:32px'>43.83346</div>
<div class='t' style='left:255px;top:255px;font-size:25px;letter-spacing:-0.203px;'>2CXO J004247.8+411549</div>
<div class='t mono' style='right:850.0px;top:251px;line-height:32px'>10.69952</div>
<div class='t mono' style='right:670.0px;top:251px;line-height:32px'>41.26383</div>
<div class='t mono' style='right:506.5px;top:251px;line-height:32px'>0.29052</div>
<div class='t mono' style='right:342.5px;top:251px;line-height:32px'>0.29047</div>
<div class='t mono' style='right:227.0px;top:251px;line-height:32px'>0.</div>
<div class='t mono' style='right:-2.0px;top:251px;line-height:32px'>54.29</div>
<div class='t' style='left:17px;top:286px;font-size:21.5px;letter-spacing:-.2px'>38</div>
<div class='a' style='left:60px;top:288px;width:2px;height:22px;background:#e3e3e3'></div>
<div class='t mono' style='right:1399.5px;top:283px;line-height:32px'>45.17357</div>
<div class='t' style='left:255px;top:287px;font-size:25px;letter-spacing:-0.203px;'>2CXO J004245.0+411523</div>
<div class='t mono' style='right:850.0px;top:283px;line-height:32px'>10.68789</div>
<div class='t mono' style='right:670.0px;top:283px;line-height:32px'>41.25643</div>
<div class='t mono' style='right:506.5px;top:283px;line-height:32px'>0.29059</div>
<div class='t mono' style='right:342.5px;top:283px;line-height:32px'>0.29055</div>
<div class='t mono' style='right:147.0px;top:283px;line-height:32px'>69.02515</div>
<div class='t mono' style='right:-2.0px;top:283px;line-height:32px'>32.60</div>
<div class='t' style='left:17px;top:318px;font-size:21.5px;letter-spacing:-.2px'>39</div>
<div class='a' style='left:60px;top:320px;width:2px;height:22px;background:#e3e3e3'></div>
<div class='t mono' style='right:1399.5px;top:315px;line-height:32px'>47.27269</div>
<div class='t' style='left:255px;top:319px;font-size:25px;letter-spacing:-0.203px;'>2CXO J004245.0+411520</div>
<div class='t mono' style='right:850.0px;top:315px;line-height:32px'>10.68773</div>
<div class='t mono' style='right:670.0px;top:315px;line-height:32px'>41.25582</div>
<div class='t mono' style='right:506.5px;top:315px;line-height:32px'>0.29737</div>
<div class='t mono' style='right:342.5px;top:315px;line-height:32px'>0.29592</div>
<div class='t mono' style='right:147.0px;top:315px;line-height:32px'>94.65973</div>
<div class='t mono' style='right:-2.0px;top:315px;line-height:32px'>11.30</div>
<div class='t' style='left:17px;top:350px;font-size:21.5px;letter-spacing:-.2px'>40</div>
<div class='a' style='left:60px;top:352px;width:2px;height:22px;background:#e3e3e3'></div>
<div class='t mono' style='right:1399.5px;top:347px;line-height:32px'>48.38257</div>
<div class='t' style='left:255px;top:351px;font-size:25px;letter-spacing:-0.203px;'>2CXO J004240.4+411546</div>
<div class='t mono' style='right:850.0px;top:347px;line-height:32px'>10.66868</div>
<div class='t mono' style='right:670.0px;top:347px;line-height:32px'>41.26279</div>
<div class='t mono' style='right:506.5px;top:347px;line-height:32px'>0.32434</div>
<div class='t mono' style='right:342.5px;top:347px;line-height:32px'>0.32434</div>
<div class='t mono' style='right:227.0px;top:347px;line-height:32px'>0.</div>
<div class='t mono' style='right:-2.0px;top:347px;line-height:32px'>17.89</div>
<div class='t' style='left:17px;top:382px;font-size:21.5px;letter-spacing:-.2px'>41</div>
<div class='a' style='left:60px;top:384px;width:2px;height:22px;background:#e3e3e3'></div>
<div class='t mono' style='right:1399.5px;top:379px;line-height:32px'>48.44528</div>
<div class='t' style='left:255px;top:383px;font-size:25px;letter-spacing:-0.203px;'>2CXO J004248.5+411613</div>
<div class='t mono' style='right:850.0px;top:379px;line-height:32px'>10.70249</div>
<div class='t mono' style='right:670.0px;top:379px;line-height:32px'>41.27031</div>
<div class='t mono' style='right:506.5px;top:379px;line-height:32px'>0.35752</div>
<div class='t mono' style='right:342.5px;top:379px;line-height:32px'>0.33241</div>
<div class='t mono' style='right:147.0px;top:379px;line-height:32px'>119.38644</div>
<div class='t mono' style='right:-2.0px;top:379px;line-height:32px'>17.19</div>
<div class='t' style='left:17px;top:414px;font-size:21.5px;letter-spacing:-.2px'>42</div>
<div class='a' style='left:60px;top:416px;width:2px;height:22px;background:#e3e3e3'></div>
<div class='t mono' style='right:1399.5px;top:411px;line-height:32px'>52.22445</div>
<div class='t' style='left:255px;top:415px;font-size:25px;letter-spacing:-0.203px;'>2CXO J004248.7+411624</div>
<div class='t mono' style='right:850.0px;top:411px;line-height:32px'>10.70297</div>
<div class='t mono' style='right:670.0px;top:411px;line-height:32px'>41.27345</div>
<div class='t mono' style='right:506.5px;top:411px;line-height:32px'>0.29076</div>
<div class='t mono' style='right:342.5px;top:411px;line-height:32px'>0.29059</div>
<div class='t mono' style='right:147.0px;top:411px;line-height:32px'>9.84791</div>
<div class='t mono' style='right:-2.0px;top:411px;line-height:32px'>33.19</div>
<div class='t' style='left:17px;top:446px;font-size:21.5px;letter-spacing:-.2px'>43</div>
<div class='a' style='left:60px;top:448px;width:2px;height:22px;background:#e3e3e3'></div>
<div class='t mono' style='right:1399.5px;top:443px;line-height:32px'>52.80119</div>
<div class='t' style='left:255px;top:447px;font-size:25px;letter-spacing:-0.203px;'>2CXO J004239.9+411547</div>
<div class='t mono' style='right:850.0px;top:443px;line-height:32px'>10.66665</div>
<div class='t mono' style='right:686.0px;top:443px;line-height:32px'>41.2632</div>
<div class='t mono' style='right:522.5px;top:443px;line-height:32px'>0.2901</div>
<div class='t mono' style='right:342.5px;top:443px;line-height:32px'>0.29003</div>
<div class='t mono' style='right:147.0px;top:443px;line-height:32px'>88.85436</div>
<div class='t mono' style='right:-2.0px;top:443px;line-height:32px'>110.04</div>
<div class='t' style='left:17px;top:478px;font-size:21.5px;letter-spacing:-.2px'>44</div>
<div class='a' style='left:60px;top:480px;width:2px;height:22px;background:#e3e3e3'></div>
<div class='t mono' style='right:1415.5px;top:475px;line-height:32px'>52.9685</div>
<div class='t' style='left:255px;top:479px;font-size:25px;letter-spacing:-0.203px;'>2CXO J004248.7+411626</div>
<div class='t mono' style='right:850.0px;top:475px;line-height:32px'>10.70298</div>
<div class='t mono' style='right:670.0px;top:475px;line-height:32px'>41.27402</div>
<div class='t mono' style='right:506.5px;top:475px;line-height:32px'>0.31797</div>
<div class='t mono' style='right:342.5px;top:475px;line-height:32px'>0.31794</div>
<div class='t mono' style='right:227.0px;top:475px;line-height:32px'>0.</div>
<div class='t mono' style='right:-2.0px;top:475px;line-height:32px'>12.83</div>
<div class='t' style='left:17px;top:510px;font-size:21.5px;letter-spacing:-.2px'>45</div>
<div class='a' style='left:60px;top:512px;width:2px;height:22px;background:#e3e3e3'></div>
<div class='t mono' style='right:1399.5px;top:507px;line-height:32px'>53.01022</div>
<div class='t' style='left:255px;top:511px;font-size:25px;letter-spacing:-0.203px;'>2CXO J004247.8+411532</div>
<div class='t mono' style='right:850.0px;top:507px;line-height:32px'>10.69955</div>
<div class='t mono' style='right:670.0px;top:507px;line-height:32px'>41.25914</div>
<div class='t mono' style='right:506.5px;top:507px;line-height:32px'>0.29007</div>
<div class='t mono' style='right:342.5px;top:507px;line-height:32px'>0.29007</div>
<div class='t mono' style='right:147.0px;top:507px;line-height:32px'>1.54168</div>
<div class='t mono' style='right:-2.0px;top:507px;line-height:32px'>118.62</div>
<div class='t' style='left:17px;top:542px;font-size:21.5px;letter-spacing:-.2px'>46</div>
<div class='a' style='left:60px;top:544px;width:2px;height:22px;background:#e3e3e3'></div>
<div class='t mono' style='right:1399.5px;top:539px;line-height:32px'>53.66842</div>
<div class='t' style='left:255px;top:543px;font-size:25px;letter-spacing:-0.203px;'>2CXO J004243.7+411514</div>
<div class='t mono' style='right:850.0px;top:539px;line-height:32px'>10.68245</div>
<div class='t mono' style='right:670.0px;top:539px;line-height:32px'>41.25394</div>
<div class='t mono' style='right:506.5px;top:539px;line-height:32px'>0.29125</div>
<div class='t mono' style='right:342.5px;top:539px;line-height:32px'>0.29101</div>
<div class='t mono' style='right:147.0px;top:539px;line-height:32px'>90.49237</div>
<div class='t mono' style='right:-2.0px;top:539px;line-height:32px'>22.45</div>
<div class='t' style='left:17px;top:574px;font-size:21.5px;letter-spacing:-.2px'>47</div>
<div class='a' style='left:60px;top:576px;width:2px;height:22px;background:#e3e3e3'></div>
<div class='t mono' style='right:1399.5px;top:571px;line-height:32px'>53.78442</div>
<div class='t' style='left:255px;top:575px;font-size:25px;letter-spacing:-0.203px;'>2CXO J004239.5+411614</div>
<div class='t mono' style='right:850.0px;top:571px;line-height:32px'>10.66499</div>
<div class='t mono' style='right:670.0px;top:571px;line-height:32px'>41.27062</div>
<div class='t mono' style='right:506.5px;top:571px;line-height:32px'>0.29099</div>
<div class='t mono' style='right:342.5px;top:571px;line-height:32px'>0.29098</div>
<div class='t mono' style='right:227.0px;top:571px;line-height:32px'>0.</div>
<div class='t mono' style='right:-2.0px;top:571px;line-height:32px'>48.67</div>
<div class='a' style='left:64px;top:604px;width:177.5px;height:30px;background:#c9c9c9'></div>
<div class='a' style='left:244.5px;top:604px;width:367.0px;height:30px;background:#c9c9c9'></div>
<div class='a' style='left:614.5px;top:604px;width:177.0px;height:30px;background:#c9c9c9'></div>
<div class='a' style='left:794.5px;top:604px;width:177.0px;height:30px;background:#c9c9c9'></div>
<div class='a' style='left:974.5px;top:604px;width:161.0px;height:30px;background:#c9c9c9'></div>
<div class='a' style='left:1138.5px;top:604px;width:161.0px;height:30px;background:#c9c9c9'></div>
<div class='a' style='left:1302.5px;top:604px;width:193.0px;height:30px;background:#c9c9c9'></div>
<div class='a' style='left:1498.5px;top:604px;width:160.0px;height:30px;background:#c9c9c9'></div>
<div class='t' style='left:17px;top:606px;font-size:21.5px;letter-spacing:-.2px'>48</div>
<div class='a' style='left:60px;top:608px;width:2px;height:22px;background:#e3e3e3'></div>
<div class='t mono' style='right:1399.5px;top:603px;line-height:32px'>54.48328</div>
<div class='t' style='left:255px;top:607px;font-size:25px;letter-spacing:-0.203px;'>2CXO J004241.4+411523</div>
<div class='t mono' style='right:850.0px;top:603px;line-height:32px'>10.67267</div>
<div class='t mono' style='right:670.0px;top:603px;line-height:32px'>41.25662</div>
<div class='t mono' style='right:506.5px;top:603px;line-height:32px'>0.29037</div>
<div class='t mono' style='right:342.5px;top:603px;line-height:32px'>0.29033</div>
<div class='t mono' style='right:227.0px;top:603px;line-height:32px'>0.</div>
<div class='t mono' style='right:-2.0px;top:603px;line-height:32px'>39.03</div>
<div class='t' style='left:17px;top:638px;font-size:21.5px;letter-spacing:-.2px'>49</div>
<div class='a' style='left:60px;top:640px;width:2px;height:22px;background:#e3e3e3'></div>
<div class='t mono' style='right:1399.5px;top:635px;line-height:32px'>55.58357</div>
<div class='t' style='left:255px;top:639px;font-size:25px;letter-spacing:-0.203px;'>2CXO J004249.2+411601</div>
<div class='t mono' style='right:850.0px;top:635px;line-height:32px'>10.70511</div>
<div class='t mono' style='right:670.0px;top:635px;line-height:32px'>41.26698</div>
<div class='t mono' style='right:506.5px;top:635px;line-height:32px'>0.29018</div>
<div class='t mono' style='right:342.5px;top:635px;line-height:32px'>0.29016</div>
<div class='t mono' style='right:147.0px;top:635px;line-height:32px'>31.21947</div>
<div class='t mono' style='right:-2.0px;top:635px;line-height:32px'>53.20</div>
<div class='t' style='left:17px;top:670px;font-size:21.5px;letter-spacing:-.2px'>50</div>
<div class='a' style='left:60px;top:672px;width:2px;height:22px;background:#e3e3e3'></div>
<div class='t mono' style='right:1399.5px;top:667px;line-height:32px'>55.67466</div>
<div class='t' style='left:255px;top:671px;font-size:25px;letter-spacing:-0.203px;'>2CXO J004242.5+411659</div>
<div class='t mono' style='right:850.0px;top:667px;line-height:32px'>10.67719</div>
<div class='t mono' style='right:670.0px;top:667px;line-height:32px'>41.28315</div>
<div class='t mono' style='right:506.5px;top:667px;line-height:32px'>0.29096</div>
<div class='t mono' style='right:342.5px;top:667px;line-height:32px'>0.29091</div>
<div class='t mono' style='right:147.0px;top:667px;line-height:32px'>60.31743</div>
<div class='t mono' style='right:-2.0px;top:667px;line-height:32px'>27.13</div>
<div class='t' style='left:17px;top:702px;font-size:21.5px;letter-spacing:-.2px'>51</div>
<div class='a' style='left:60px;top:704px;width:2px;height:22px;background:#e3e3e3'></div>
<div class='t mono' style='right:1399.5px;top:699px;line-height:32px'>55.79971</div>
<div class='t' style='left:255px;top:703px;font-size:25px;letter-spacing:-0.203px;'>2CXO J004247.8+411528</div>
<div class='t mono' style='right:850.0px;top:699px;line-height:32px'>10.69931</div>
<div class='t mono' style='right:686.0px;top:699px;line-height:32px'>41.2578</div>
<div class='t mono' style='right:506.5px;top:699px;line-height:32px'>0.44594</div>
<div class='t mono' style='right:342.5px;top:699px;line-height:32px'>0.37417</div>
<div class='t mono' style='right:147.0px;top:699px;line-height:32px'>7.50043</div>
<div class='t mono' style='right:-2.0px;top:699px;line-height:32px'>5.67</div>
<div class='t' style='left:17px;top:734px;font-size:21.5px;letter-spacing:-.2px'>52</div>
<div class='a' style='left:60px;top:736px;width:2px;height:22px;background:#e3e3e3'></div>
<div class='t mono' style='right:1399.5px;top:731px;line-height:32px'>56.92871</div>
<div class='t' style='left:255px;top:735px;font-size:25px;letter-spacing:-0.203px;'>2CXO J004249.1+411623</div>
<div class='t mono' style='right:850.0px;top:731px;line-height:32px'>10.70487</div>
<div class='t mono' style='right:670.0px;top:731px;line-height:32px'>41.27327</div>
<div class='t mono' style='right:506.5px;top:731px;line-height:32px'>0.35011</div>
<div class='t mono' style='right:342.5px;top:731px;line-height:32px'>0.34792</div>
<div class='t mono' style='right:147.0px;top:731px;line-height:32px'>108.00007</div>
<div class='t mono' style='right:-2.0px;top:731px;line-height:32px'>9.01</div>
<div class='t' style='left:17px;top:766px;font-size:21.5px;letter-spacing:-.2px'>53</div>
<div class='a' style='left:60px;top:768px;width:2px;height:22px;background:#e3e3e3'></div>
<div class='t mono' style='right:1399.5px;top:763px;line-height:32px'>59.18836</div>
<div class='t' style='left:255px;top:767px;font-size:25px;letter-spacing:-0.203px;'>2CXO J004243.0+411510</div>
<div class='t mono' style='right:850.0px;top:763px;line-height:32px'>10.67927</div>
<div class='t mono' style='right:670.0px;top:763px;line-height:32px'>41.25283</div>
<div class='t mono' style='right:506.5px;top:763px;line-height:32px'>0.29501</div>
<div class='t mono' style='right:342.5px;top:763px;line-height:32px'>0.29424</div>
<div class='t mono' style='right:147.0px;top:763px;line-height:32px'>120.89771</div>
<div class='t mono' style='right:-2.0px;top:763px;line-height:32px'>17.44</div>
</div>
<div class='a' style='left:0;top:31px;width:1624px;height:2px;background:#fff'></div>
</div>
<div class='a' style='left:1644px;top:194px;width:32px;height:797px;background:#fafafa;border-left:2px solid #e8e8e8'></div>
<div class='a' style='left:1652px;top:620px;width:16px;height:368px;border-radius:8px;background:#c1c1c1'></div>
<div class='a' style='left:84px;top:991px;width:1592px;height:28px;background:#fafafa;border-top:2px solid #e8e8e8'></div>
<div class='a' style='left:86px;top:998px;width:226px;height:16px;border-radius:8px;background:#c1c1c1'></div>
<div class='t' style='left:18px;top:1029px;font-size:25px;letter-spacing:0.447px;'>Total: 53</div>
<div class='t' style='left:170.6px;top:1029px;font-size:25px;letter-spacing:0.049px;'>Visible: 53</div>
<div class='t' style='left:342px;top:1029px;font-size:25px;letter-spacing:-0.605px;'>Selected: 1</div>
</div>
<div class='a' style='left:0;top:1764px;width:1696px;height:2px;background:#b9b9b9'></div>
<div class='a' style='left:104px;top:1764px;width:112px;height:2px;background:#1c1c1c'></div>
<div class='a' style='left:1469px;top:1764px;width:65px;height:2px;background:#a88c86'></div>
<div class='a' style='left:1534px;top:1764px;width:160px;height:2px;background:#0c0c0c'></div>
<div class='win' style='left:1693px;top:0;width:2023px;height:2066px;box-shadow:0 30px 50px rgba(0,0,0,.45)'>
<div class='tb'><div class='tl' style='left:17px'></div><div class='tl' style='left:57px'></div><div class='tl' style='left:97px'></div><div class='ttl' style='left:0;width:1823px;letter-spacing:0.367px;text-indent:0.367px'>Plane Plot</div></div>
<div class='sep' style='left:19px;top:52px;height:62px'></div>
<div class='ico' style='left:46px;top:62px;width:48px;height:48px'><svg viewBox='0 0 24 24' ><path d='M0.4 19.4H9 M8.6 22.6H22.5' stroke='#555' stroke-width='1.2'/><rect x='1.3' y='2.8' width='17' height='16.3' fill='#fff' stroke='#111' stroke-width='1.5'/><rect x='2' y='3.5' width='15.6' height='2' fill='#8486e4'/><path d='M4 7V16.8H8 M4 9.5H5 M4 12H5 M4 14.5H5 M6.5 16.8V15.8' fill='none' stroke='#111' stroke-width='1'/><rect x='9.6' y='11.2' width='13.4' height='10.6' fill='#fff' stroke='#111' stroke-width='1.5'/><rect x='10.3' y='11.9' width='12' height='2' fill='#8486e4'/><rect x='11.7' y='16' width='3.2' height='3.2' fill='#fff' stroke='#111' stroke-width='1.1'/><rect x='18' y='16' width='3.2' height='3.2' fill='#fff' stroke='#111' stroke-width='1.1'/><path d='M12.2 18.8 L16 15.2' stroke='#111' stroke-width='1'/></svg></div>
<div class='sep' style='left:117px;top:52px;height:62px'></div>
<div class='btn' style='left:129px;top:58px;width:72px;height:55px'><svg viewBox='0 0 24 24' ><path d='M0.8 16.5 L8 8.7 L10.5 8.7 L18.2 14.4 L24 8.7 V24 H0.8Z' fill='#e4e4e4'/><rect x='4.55' y='2.55' width='0.9' height='0.9' fill='#333'/><rect x='6.55' y='1.55' width='0.9' height='0.9' fill='#333'/><rect x='8.55' y='1.05' width='0.9' height='0.9' fill='#333'/><rect x='10.55' y='2.05' width='0.9' height='0.9' fill='#333'/><rect x='12.55' y='1.05' width='0.9' height='0.9' fill='#333'/><rect x='14.55' y='2.55' width='0.9' height='0.9' fill='#333'/><rect x='16.55' y='1.55' width='0.9' height='0.9' fill='#333'/><rect x='18.55' y='3.55' width='0.9' height='0.9' fill='#333'/><rect x='3.55' y='4.55' width='0.9' height='0.9' fill='#333'/><rect x='7.55' y='4.05' width='0.9' height='0.9' fill='#333'/><rect x='11.55' y='4.55' width='0.9' height='0.9' fill='#333'/><rect x='15.55' y='5.05' width='0.9' height='0.9' fill='#333'/><rect x='19.55' y='6.05' width='0.9' height='0.9' fill='#333'/><rect x='5.55' y='6.55' width='0.9' height='0.9' fill='#333'/><rect x='9.55' y='6.55' width='0.9' height='0.9' fill='#333'/><rect x='13.55' y='7.05' width='0.9' height='0.9' fill='#333'/><rect x='17.55' y='7.55' width='0.9' height='0.9' fill='#333'/><rect x='2.55' y='8.05' width='0.9' height='0.9' fill='#333'/><rect x='20.55' y='8.55' width='0.9' height='0.9' fill='#333'/><rect x='3.50' y='16.50' width='1.0' height='1.0' fill='#f00'/><rect x='6.50' y='15.50' width='1.0' height='1.0' fill='#f00'/><rect x='9.50' y='15.00' width='1.0' height='1.0' fill='#f00'/><rect x='12.50' y='16.50' width='1.0' height='1.0' fill='#f00'/><rect x='15.50' y='17.50' width='1.0' height='1.0' fill='#f00'/><rect x='18.50' y='15.50' width='1.0' height='1.0' fill='#f00'/><rect x='4.50' y='19.50' width='1.0' height='1.0' fill='#f00'/><rect x='7.50' y='18.50' width='1.0' height='1.0' fill='#f00'/><rect x='10.50' y='20.50' width='1.0' height='1.0' fill='#f00'/><rect x='13.50' y='19.50' width='1.0' height='1.0' fill='#f00'/><rect x='16.50' y='21.00' width='1.0' height='1.0' fill='#f00'/><rect x='19.50' y='19.00' width='1.0' height='1.0' fill='#f00'/><rect x='2.50' y='22.50' width='1.0' height='1.0' fill='#f00'/><rect x='5.50' y='23.00' width='1.0' height='1.0' fill='#f00'/><rect x='8.50' y='23.50' width='1.0' height='1.0' fill='#f00'/><rect x='11.50' y='22.50' width='1.0' height='1.0' fill='#f00'/><rect x='14.50' y='24.00' width='1.0' height='1.0' fill='#f00'/><rect x='17.50' y='23.50' width='1.0' height='1.0' fill='#f00'/><rect x='20.50' y='22.50' width='1.0' height='1.0' fill='#f00'/><rect x='9.50' y='18.00' width='1.0' height='1.0' fill='#f00'/><rect x='14.50' y='14.50' width='1.0' height='1.0' fill='#f00'/><path d='M0.8 16.5 L8 8.7 L10.5 8.7 L18.2 14.4 L24 8.7' fill='none' stroke='#000' stroke-width='1.3'/></svg></div>
<div class='btn' style='left:201px;top:58px;width:72px;height:55px'><svg viewBox='0 0 24 24' ><path d='M12 5.5 Q17.5 4 19 6.5 V9.5 Q20.5 10.5 19 12 V16 L20 17 V20.5 H13.5 L12 21.5 H7.5 V15 Q7.5 13 11 12.5 Q13 11 12 8 Z' fill='#e9e9e9' stroke='#000' stroke-width='1.4' stroke-linejoin='round'/><rect x='5.45' y='1.45' width='1.1' height='1.1' fill='#222'/><rect x='8.45' y='0.45' width='1.1' height='1.1' fill='#222'/><rect x='11.45' y='0.95' width='1.1' height='1.1' fill='#222'/><rect x='14.45' y='0.45' width='1.1' height='1.1' fill='#222'/><rect x='3.45' y='3.45' width='1.1' height='1.1' fill='#222'/><rect x='7.45' y='3.45' width='1.1' height='1.1' fill='#222'/><rect x='10.45' y='2.95' width='1.1' height='1.1' fill='#222'/><rect x='13.45' y='3.45' width='1.1' height='1.1' fill='#222'/><rect x='16.45' y='2.45' width='1.1' height='1.1' fill='#222'/><rect x='2.45' y='6.45' width='1.1' height='1.1' fill='#222'/><rect x='5.45' y='5.95' width='1.1' height='1.1' fill='#222'/><rect x='8.45' y='6.45' width='1.1' height='1.1' fill='#222'/><rect x='18.45' y='4.45' width='1.1' height='1.1' fill='#222'/><rect x='1.45' y='9.45' width='1.1' height='1.1' fill='#222'/><rect x='4.45' y='9.45' width='1.1' height='1.1' fill='#222'/><rect x='6.45' y='11.95' width='1.1' height='1.1' fill='#222'/><rect x='2.45' y='12.95' width='1.1' height='1.1' fill='#222'/><rect x='4.45' y='15.45' width='1.1' height='1.1' fill='#222'/><rect x='1.45' y='16.95' width='1.1' height='1.1' fill='#222'/><rect x='3.45' y='19.45' width='1.1' height='1.1' fill='#222'/><rect x='6.45' y='18.45' width='1.1' height='1.1' fill='#222'/><rect x='5.45' y='21.95' width='1.1' height='1.1' fill='#222'/><rect x='9.45' y='4.95' width='1.1' height='1.1' fill='#222'/><rect x='19.45' y='7.45' width='1.1' height='1.1' fill='#222'/><rect x='12.45' y='7.45' width='1.1' height='1.1' fill='#f00'/><rect x='15.45' y='6.45' width='1.1' height='1.1' fill='#f00'/><rect x='14.45' y='9.45' width='1.1' height='1.1' fill='#f00'/><rect x='11.45' y='11.45' width='1.1' height='1.1' fill='#f00'/><rect x='16.45' y='11.95' width='1.1' height='1.1' fill='#f00'/><rect x='9.45' y='14.45' width='1.1' height='1.1' fill='#f00'/><rect x='12.45' y='14.95' width='1.1' height='1.1' fill='#f00'/><rect x='15.45' y='15.45' width='1.1' height='1.1' fill='#f00'/><rect x='10.45' y='17.95' width='1.1' height='1.1' fill='#f00'/><rect x='13.45' y='18.45' width='1.1' height='1.1' fill='#f00'/><rect x='16.45' y='18.45' width='1.1' height='1.1' fill='#f00'/><rect x='17.45' y='8.45' width='1.1' height='1.1' fill='#f00'/><rect x='8.45' y='16.95' width='1.1' height='1.1' fill='#f00'/><rect x='14.45' y='12.95' width='1.1' height='1.1' fill='#f00'/></svg></div>
<div class='btn' style='left:273px;top:58px;width:72px;height:55px'><svg viewBox='0 0 24 24' ><rect x='6' y='4.5' width='12.5' height='11.5' fill='#e9e9e9' stroke='#000' stroke-width='1.4'/><rect x='16.45' y='1.45' width='1.1' height='1.1' fill='#222'/><rect x='18.45' y='0.45' width='1.1' height='1.1' fill='#222'/><rect x='20.45' y='0.95' width='1.1' height='1.1' fill='#222'/><rect x='21.95' y='2.45' width='1.1' height='1.1' fill='#222'/><rect x='17.45' y='3.45' width='1.1' height='1.1' fill='#222'/><rect x='19.45' y='3.95' width='1.1' height='1.1' fill='#222'/><rect x='21.45' y='5.45' width='1.1' height='1.1' fill='#222'/><rect x='20.45' y='7.45' width='1.1' height='1.1' fill='#222'/><rect x='18.95' y='2.45' width='1.1' height='1.1' fill='#222'/><rect x='22.45' y='4.45' width='1.1' height='1.1' fill='#222'/><rect x='19.95' y='5.95' width='1.1' height='1.1' fill='#222'/><rect x='4.45' y='16.45' width='1.1' height='1.1' fill='#222'/><rect x='2.95' y='17.95' width='1.1' height='1.1' fill='#222'/><rect x='5.45' y='18.45' width='1.1' height='1.1' fill='#222'/><rect x='1.45' y='19.45' width='1.1' height='1.1' fill='#222'/><rect x='3.45' y='20.45' width='1.1' height='1.1' fill='#222'/><rect x='0.95' y='21.95' width='1.1' height='1.1' fill='#222'/><rect x='2.45' y='22.45' width='1.1' height='1.1' fill='#222'/><rect x='6.45' y='16.95' width='1.1' height='1.1' fill='#222'/><rect x='4.45' y='19.45' width='1.1' height='1.1' fill='#222'/><rect x='7.45' y='5.45' width='1.1' height='1.1' fill='#f00'/><rect x='10.45' y='4.95' width='1.1' height='1.1' fill='#f00'/><rect x='13.45' y='5.95' width='1.1' height='1.1' fill='#f00'/><rect x='15.45' y='7.45' width='1.1' height='1.1' fill='#f00'/><rect x='8.45' y='8.45' width='1.1' height='1.1' fill='#f00'/><rect x='11.45' y='8.95' width='1.1' height='1.1' fill='#f00'/><rect x='14.45' y='9.95' width='1.1' height='1.1' fill='#f00'/><rect x='7.45' y='11.45' width='1.1' height='1.1' fill='#f00'/><rect x='10.45' y='11.95' width='1.1' height='1.1' fill='#f00'/><rect x='13.45' y='12.45' width='1.1' height='1.1' fill='#f00'/><rect x='15.95' y='11.45' width='1.1' height='1.1' fill='#f00'/><rect x='9.45' y='13.95' width='1.1' height='1.1' fill='#f00'/><rect x='12.45' y='14.45' width='1.1' height='1.1' fill='#f00'/><rect x='6.45' y='13.95' width='1.1' height='1.1' fill='#f00'/><rect x='11.45' y='6.95' width='1.1' height='1.1' fill='#f00'/></svg></div>
<div class='btn' style='left:345px;top:58px;width:72px;height:55px'><svg viewBox='0 0 24 24' ><path d='M14 1.5 L22 7.5 L14 13 V10 Q8.5 10 8.5 14.5 Q8.5 18.5 13 18.8 L17 17.5 V21 L12.5 22.5 Q3.5 22 3.5 14 Q3.5 5.5 14 5 Z' fill='#a9a9dc' stroke='#16163a' stroke-width='1.2' stroke-linejoin='round'/><path d='M14.8 3.2 L20.3 7.4 M13.6 6 Q5 6.6 4.6 13.5' fill='none' stroke='#dcdcf6' stroke-width='0.9'/></svg></div>
<div class='btn' style='left:417px;top:58px;width:71px;height:55px'><svg viewBox='0 0 24 24' ><path d='M12 0.8 L16.5 5.6 H14 V10 H18.4 V7.5 L23.2 12 L18.4 16.5 V14 H14 V18.4 H16.5 L12 23.2 L7.5 18.4 H10 V14 H5.6 V16.5 L0.8 12 L5.6 7.5 V10 H10 V5.6 H7.5 Z' fill='#3ba4ee' stroke='#082848' stroke-width='1.1' stroke-linejoin='round'/><path d='M12 2.6 L9.2 5.2 M10.8 6 V10.8 H6 M5.2 9.2 L2.6 12' fill='none' stroke='#a8dcff' stroke-width='0.9'/></svg></div>
<div class='ico' style='left:503px;top:62px;width:48px;height:48px'><svg viewBox='0 0 24 24' ><path d='M1.5 1V22.5H23' fill='none' stroke='#000' stroke-width='1.4'/><path d='M1.5 4.5H3 M1.5 9H3 M1.5 13.5H3 M1.5 18H3 M5 22.5V21 M9 22.5V21 M13 22.5V21 M17 22.5V21 M21 22.5V21' stroke='#000' stroke-width='1'/><path d='M10.1 9.5 V6.0 Q10.1 2.5 13.5 2.5 Q16.9 2.5 16.9 6.0 V9.5' fill='none' stroke='#9a9a9a' stroke-width='2.2'/><path d='M10.1 9.5 V6.0 Q10.1 2.5 13.5 2.5 Q16.9 2.5 16.9 6.0 V9.5' fill='none' stroke='#e8e8e8' stroke-width='0.8'/><defs><linearGradient id='lg13.5' x1='0' y1='0' x2='1' y2='1'><stop offset='0' stop-color='#fff27a'/><stop offset='.5' stop-color='#f2d21c'/><stop offset='1' stop-color='#c89c00'/></linearGradient></defs><rect x='7.0' y='9.0' width='13' height='9.5' rx='1.2' fill='url(#lg13.5)' stroke='#b08a00' stroke-width='0.8'/></svg></div>
<div class='ico' style='left:579px;top:62px;width:48px;height:48px'><svg viewBox='0 0 24 24' ><defs><linearGradient id='auxg' x1='0' x2='1'><stop offset='0' stop-color='#1a00c8'/><stop offset='.35' stop-color='#8a109a'/><stop offset='.65' stop-color='#e84a18'/><stop offset='1' stop-color='#ffe000'/></linearGradient></defs><rect x='0.8' y='14.5' width='22.4' height='8' fill='url(#auxg)' stroke='#444' stroke-width='0.9'/><path d='M8.6 9.5 V6.0 Q8.6 2.5 12 2.5 Q15.4 2.5 15.4 6.0 V9.5' fill='none' stroke='#9a9a9a' stroke-width='2.2'/><path d='M8.6 9.5 V6.0 Q8.6 2.5 12 2.5 Q15.4 2.5 15.4 6.0 V9.5' fill='none' stroke='#e8e8e8' stroke-width='0.8'/><defs><linearGradient id='lg12' x1='0' y1='0' x2='1' y2='1'><stop offset='0' stop-color='#fff27a'/><stop offset='.5' stop-color='#f2d21c'/><stop offset='1' stop-color='#c89c00'/></linearGradient></defs><rect x='5.5' y='9.0' width='13' height='9.5' rx='1.2' fill='url(#lg12)' stroke='#b08a00' stroke-width='0.8'/></svg></div>
<div class='a' style='left:641px;top:48px;width:76px;height:76px;background:#e1e1e1;border-radius:8px 8px 0 0'></div>
<div class='a' style='left:717px;top:48px;width:76px;height:76px;background:#e1e1e1;border-radius:8px 8px 0 0'></div>
<div class='ico' style='left:655px;top:62px;width:48px;height:48px'><svg viewBox='0 0 24 24' ><rect x='1.71' y='6.86' width='1.76' height='1.76' fill='#0a50ff'/><rect x='1.71' y='8.57' width='1.76' height='1.76' fill='#0a50ff'/><rect x='1.71' y='10.29' width='1.76' height='1.76' fill='#0a90ff'/><rect x='1.71' y='12.00' width='1.76' height='1.76' fill='#0a90ff'/><rect x='1.71' y='13.71' width='1.76' height='1.76' fill='#0a90ff'/><rect x='1.71' y='15.43' width='1.76' height='1.76' fill='#0a90ff'/><rect x='1.71' y='17.14' width='1.76' height='1.76' fill='#0a50ff'/><rect x='1.71' y='18.86' width='1.76' height='1.76' fill='#0a50ff'/><rect x='3.43' y='6.86' width='1.76' height='1.76' fill='#0a50ff'/><rect x='3.43' y='8.57' width='1.76' height='1.76' fill='#0a90ff'/><rect x='3.43' y='10.29' width='1.76' height='1.76' fill='#18d0f8'/><rect x='3.43' y='12.00' width='1.76' height='1.76' fill='#50f0c0'/><rect x='3.43' y='13.71' width='1.76' height='1.76' fill='#50f0c0'/><rect x='3.43' y='15.43' width='1.76' height='1.76' fill='#18d0f8'/><rect x='3.43' y='17.14' width='1.76' height='1.76' fill='#0a90ff'/><rect x='5.14' y='6.86' width='1.76' height='1.76' fill='#18d0f8'/><rect x='5.14' y='8.57' width='1.76' height='1.76' fill='#50f0c0'/><rect x='5.14' y='10.29' width='1.76' height='1.76' fill='#a8f860'/><rect x='5.14' y='12.00' width='1.76' height='1.76' fill='#a8f860'/><rect x='5.14' y='13.71' width='1.76' height='1.76' fill='#a8f860'/><rect x='5.14' y='15.43' width='1.76' height='1.76' fill='#50f0c0'/><rect x='6.86' y='5.14' width='1.76' height='1.76' fill='#0a90ff'/><rect x='6.86' y='6.86' width='1.76' height='1.76' fill='#50f0c0'/><rect x='6.86' y='8.57' width='1.76' height='1.76' fill='#a8f860'/><rect x='6.86' y='10.29' width='1.76' height='1.76' fill='#f4e820'/><rect x='6.86' y='12.00' width='1.76' height='1.76' fill='#f4e820'/><rect x='6.86' y='13.71' width='1.76' height='1.76' fill='#f4e820'/><rect x='8.57' y='1.71' width='1.76' height='1.76' fill='#0a50ff'/><rect x='8.57' y='3.43' width='1.76' height='1.76' fill='#0a90ff'/><rect x='8.57' y='5.14' width='1.76' height='1.76' fill='#18d0f8'/><rect x='8.57' y='6.86' width='1.76' height='1.76' fill='#a8f860'/><rect x='8.57' y='8.57' width='1.76' height='1.76' fill='#f4e820'/><rect x='8.57' y='10.29' width='1.76' height='1.76' fill='#f02010'/><rect x='8.57' y='12.00' width='1.76' height='1.76' fill='#ff9010'/><rect x='10.29' y='1.71' width='1.76' height='1.76' fill='#0a50ff'/><rect x='10.29' y='3.43' width='1.76' height='1.76' fill='#0a90ff'/><rect x='10.29' y='5.14' width='1.76' height='1.76' fill='#50f0c0'/><rect x='10.29' y='6.86' width='1.76' height='1.76' fill='#a8f860'/><rect x='10.29' y='8.57' width='1.76' height='1.76' fill='#ff9010'/><rect x='10.29' y='10.29' width='1.76' height='1.76' fill='#ff9010'/><rect x='12.00' y='0.00' width='1.76' height='1.76' fill='#0a50ff'/><rect x='12.00' y='1.71' width='1.76' height='1.76' fill='#0a50ff'/><rect x='12.00' y='3.43' width='1.76' height='1.76' fill='#0a90ff'/><rect x='12.00' y='5.14' width='1.76' height='1.76' fill='#50f0c0'/><rect x='12.00' y='6.86' width='1.76' height='1.76' fill='#a8f860'/><rect x='12.00' y='8.57' width='1.76' height='1.76' fill='#f4e820'/><rect x='13.71' y='3.43' width='1.76' height='1.76' fill='#0a90ff'/><rect x='13.71' y='5.14' width='1.76' height='1.76' fill='#18d0f8'/><rect x='13.71' y='6.86' width='1.76' height='1.76' fill='#50f0c0'/><rect x='15.43' y='0.00' width='1.76' height='1.76' fill='#0a50ff'/><rect x='15.43' y='1.71' width='1.76' height='1.76' fill='#0a50ff'/><rect x='15.43' y='3.43' width='1.76' height='1.76' fill='#0a90ff'/><rect x='15.43' y='5.14' width='1.76' height='1.76' fill='#18d0f8'/><rect x='17.14' y='1.71' width='1.76' height='1.76' fill='#0a50ff'/><rect x='17.14' y='3.43' width='1.76' height='1.76' fill='#0a50ff'/><rect x='18.5' y='8.3' width='2.4' height='2.4' fill='#0a60ff'/><rect x='16.3' y='12.3' width='2.4' height='2.4' fill='#0a60ff'/><rect x='9.6' y='14' width='2.4' height='2.4' fill='#0a60ff'/><rect x='13.5' y='16.3' width='2.4' height='2.4' fill='#0a60ff'/><rect x='20.3' y='16.3' width='2.4' height='2.4' fill='#0a60ff'/><rect x='6.4' y='18.3' width='2.4' height='2.4' fill='#0a60ff'/><rect x='16.3' y='20.3' width='2.4' height='2.4' fill='#0a60ff'/><rect x='22.6' y='5' width='2.4' height='2.4' fill='#0a60ff'/><path d='M1 23 L23 1' stroke='#777' stroke-width='0.9'/></svg></div>
<div class='ico' style='left:731px;top:62px;width:48px;height:48px'><svg viewBox='0 0 24 24' ><rect x='0.6' y='0.2' width='23.2' height='9' fill='#fff'/><path d='M0.8 0V9.4H24' fill='none' stroke='#000' stroke-width='1.2'/><path d='M1.4 2.5H2.4M1.4 5.5H2.4M4 9.4V8.4M7 9.4V8.4M10 9.4V8.4M13 9.4V8.4M16 9.4V8.4M19 9.4V8.4M22 9.4V8.4' stroke='#000' stroke-width='0.8'/><rect x='0.7' y='12.7' width='23' height='11' fill='#dfe6f2' stroke='#6e80a8' stroke-width='1'/><rect x='1.2' y='13.6' width='15.8' height='9.6' fill='#a6b8d6'/><text x='12.6' y='22' text-anchor='middle' font-family="'Liberation Sans','DejaVu Sans',sans-serif" font-size='10' fill='#111'>%</text></svg></div>
<div class='btn' style='left:794px;top:58px;width:71px;height:55px'><svg viewBox='0 0 24 24' ><rect x='3.4' y='2.6' width='17' height='18' fill='#fff' stroke='#000' stroke-width='1.2'/><rect x='5' y='4.5' width='7.6' height='7.5' fill='#f22828'/><path d='M19.4 11.5 V18.8 H10.9Z' fill='#1a7fc8'/><circle cx='11.9' cy='11.9' r='3.9' fill='#109a20' stroke='#064a0c' stroke-width='0.6'/><ellipse cx='11' cy='10.3' rx='1.6' ry='1' fill='#c8f4c0'/></svg></div>
<div class='sep' style='left:875px;top:52px;height:62px'></div>
<div class='btn' style='left:887px;top:58px;width:72px;height:55px'><svg viewBox='0 0 24 24' ><path d='M4 2.5 H19 Q21.5 2.5 21.5 5 V14.5 Q21.5 17 19 17 H10.5 L5 21.5 L5.8 17 H4.5 Q2.5 17 2.5 14.5 V5 Q2.5 2.5 4.5 2.5Z' fill='#fff' stroke='#111' stroke-width='1.8' stroke-linejoin='round'/><text x='12.2' y='15' text-anchor='middle' font-family="'Liberation Serif','DejaVu Serif',serif" font-weight='bold' font-size='15' fill='#000'>?</text></svg></div>
<div class='btn' style='left:959px;top:58px;width:71px;height:55px'><svg viewBox='0 0 24 24' ><path d='M5 5.5 L19 19 M19 5.5 L5 19' stroke='#000' stroke-width='3.4'/></svg></div>
<div class='sep' style='left:1041px;top:52px;height:62px'></div>
<div class='a' style='left:21px;top:148px;width:1785px;height:1480px;border:2px solid #8e8e8e'></div>
<div class='a' style='left:151px;top:168px;width:1611px;height:826px;background:#fff;border:2px solid #000'></div>
<svg class='a' style='left:0;top:0' width='1823' height='1100' viewBox='1693 0 1823 1100'><rect x='1913.0' y='988' width='2' height='4' fill='#000'/><rect x='1846' y='986.4' width='4' height='2' fill='#000'/><rect x='1990.4' y='988' width='2' height='4' fill='#000'/><rect x='1846' y='947.0' width='4' height='2' fill='#000'/><rect x='2058.6' y='988' width='2' height='4' fill='#000'/><rect x='1846' y='912.2' width='4' height='2' fill='#000'/><rect x='2119.7' y='988' width='2' height='10' fill='#000'/><rect x='1840' y='881.1' width='10' height='2' fill='#000'/><rect x='2174.9' y='988' width='2' height='4' fill='#000'/><rect x='1846' y='853.0' width='4' height='2' fill='#000'/><rect x='2225.4' y='988' width='2' height='4' fill='#000'/><rect x='1846' y='827.3' width='4' height='2' fill='#000'/><rect x='2271.8' y='988' width='2' height='4' fill='#000'/><rect x='1846' y='803.6' width='4' height='2' fill='#000'/><rect x='2314.7' y='988' width='2' height='4' fill='#000'/><rect x='1846' y='781.7' width='4' height='2' fill='#000'/><rect x='2354.7' y='988' width='2' height='10' fill='#000'/><rect x='1840' y='761.4' width='10' height='2' fill='#000'/><rect x='2392.1' y='988' width='2' height='4' fill='#000'/><rect x='1846' y='742.3' width='4' height='2' fill='#000'/><rect x='2427.2' y='988' width='2' height='4' fill='#000'/><rect x='1846' y='724.4' width='4' height='2' fill='#000'/><rect x='2460.4' y='988' width='2' height='4' fill='#000'/><rect x='1846' y='707.5' width='4' height='2' fill='#000'/><rect x='2491.7' y='988' width='2' height='4' fill='#000'/><rect x='1846' y='691.5' width='4' height='2' fill='#000'/><rect x='2521.4' y='988' width='2' height='10' fill='#000'/><rect x='1840' y='676.4' width='10' height='2' fill='#000'/><rect x='2549.7' y='988' width='2' height='4' fill='#000'/><rect x='1846' y='662.0' width='4' height='2' fill='#000'/><rect x='2576.7' y='988' width='2' height='4' fill='#000'/><rect x='1846' y='648.3' width='4' height='2' fill='#000'/><rect x='2602.4' y='988' width='2' height='4' fill='#000'/><rect x='1846' y='635.1' width='4' height='2' fill='#000'/><rect x='2627.1' y='988' width='2' height='4' fill='#000'/><rect x='1846' y='622.6' width='4' height='2' fill='#000'/><rect x='2650.8' y='988' width='2' height='10' fill='#000'/><rect x='1840' y='610.5' width='10' height='2' fill='#000'/><rect x='2756.4' y='988' width='2' height='4' fill='#000'/><rect x='1846' y='556.7' width='4' height='2' fill='#000'/><rect x='2845.8' y='988' width='2' height='4' fill='#000'/><rect x='1846' y='511.1' width='4' height='2' fill='#000'/><rect x='2923.1' y='988' width='2' height='4' fill='#000'/><rect x='1846' y='471.7' width='4' height='2' fill='#000'/><rect x='2991.4' y='988' width='2' height='4' fill='#000'/><rect x='1846' y='436.9' width='4' height='2' fill='#000'/><rect x='3052.5' y='988' width='2' height='10' fill='#000'/><rect x='1840' y='405.8' width='10' height='2' fill='#000'/><rect x='3158.1' y='988' width='2' height='4' fill='#000'/><rect x='1846' y='352.0' width='4' height='2' fill='#000'/><rect x='3247.5' y='988' width='2' height='4' fill='#000'/><rect x='1846' y='306.4' width='4' height='2' fill='#000'/><rect x='3324.9' y='988' width='2' height='4' fill='#000'/><rect x='1846' y='267.0' width='4' height='2' fill='#000'/><rect x='3393.1' y='988' width='2' height='4' fill='#000'/><rect x='1846' y='232.2' width='4' height='2' fill='#000'/><rect x='1840' y='201.1' width='10' height='2' fill='#000'/><rect x='1846' y='173.0' width='4' height='2' fill='#000'/><circle cx='1875' cy='977' r='7' fill='#e60000'/><circle cx='1957' cy='927' r='7' fill='#e60000'/><circle cx='2010.5' cy='899' r='7' fill='#e60000'/><circle cx='2060' cy='884.5' r='7' fill='#e60000'/><circle cx='2162.5' cy='827' r='7' fill='#e60000'/><circle cx='2209.5' cy='803' r='7' fill='#e60000'/><circle cx='2637' cy='585.5' r='7' fill='#e60000'/><circle cx='2677' cy='567' r='7' fill='#e60000'/><circle cx='3421' cy='183' r='7' fill='#e60000'/><circle cx='2060' cy='885' r='11' fill='#fff' stroke='#000' stroke-width='4'/><circle cx='2060' cy='885' r='6.5' fill='#e60000'/><path d='M2042 885H2054M2066 885H2078M2060 868V878M2060 892V902' stroke='#000' stroke-width='4'/></svg>
<div class='t' style='left:390.6999999999998px;top:1003.5px;font-size:24.5px;letter-spacing:0.263px;'>2e-14</div>
<div class='t' style='left:625.6937852098063px;top:1003.5px;font-size:24.5px;letter-spacing:0.263px;'>3e-14</div>
<div class='t' style='left:792.4245292135829px;top:1003.5px;font-size:24.5px;letter-spacing:0.263px;'>4e-14</div>
<div class='t' style='left:921.7509415728341px;top:1003.5px;font-size:24.5px;letter-spacing:0.263px;'>5e-14</div>
<div class='t' style='left:1323.4754707864167px;top:1003.5px;font-size:24.5px;letter-spacing:0.263px;'>1e-13</div>
<div class='t' style='left:68px;top:873px;font-size:24.5px;letter-spacing:0.163px;'>2e-14</div>
<div class='t' style='left:68px;top:753px;font-size:24.5px;letter-spacing:0.163px;'>3e-14</div>
<div class='t' style='left:68px;top:668px;font-size:24.5px;letter-spacing:0.163px;'>4e-14</div>
<div class='t' style='left:68px;top:602px;font-size:24.5px;letter-spacing:0.163px;'>5e-14</div>
<div class='t' style='left:68px;top:397px;font-size:24.5px;letter-spacing:0.163px;'>1e-13</div>
<div class='t' style='left:68px;top:193px;font-size:24.5px;letter-spacing:0.163px;'>2e-13</div>
<div class='t' style='left:754.5999999999999px;top:1041px;font-size:24.5px;letter-spacing:-0.443px;'>flux_powlaw_aper_b / erg/s/cm^2</div>
<div class='t' style='left:56px;top:731px;font-size:24.5px;letter-spacing:-0.293px;transform-origin:0 21px;transform:rotate(-90deg);'>flux_bb_aper_b / erg/s/cm^2</div>
<div class='a' style='left:23px;top:1073px;width:1781px;height:17px;background:linear-gradient(#fff,#f2f2f2);border-top:2px solid #dadada'></div>
<svg class='a' style='left:27px;top:1075px' width='40' height='14' viewBox='0 0 40 14'><path d='M1 11L7 2L13 11Z M23 3L29 12L35 3Z' fill='#8d8d8d'/></svg>
<div class='a' style='left:907px;top:1076px;width:11px;height:11px;border-radius:50%;background:#cfcfcf'></div>
<div class='grip' style='left:33px;top:1096px;height:71px'></div>
<div class='ico' style='left:64px;top:1107px;width:48px;height:48px'><svg viewBox='0 0 24 24' ><path d='M0.4 19.4H9 M8.6 22.6H22.5' stroke='#555' stroke-width='1.2'/><rect x='1.3' y='2.8' width='17' height='16.3' fill='#fff' stroke='#111' stroke-width='1.5'/><rect x='2' y='3.5' width='15.6' height='2' fill='#8486e4'/><path d='M4 7V16.8H8 M4 9.5H5 M4 12H5 M4 14.5H5 M6.5 16.8V15.8' fill='none' stroke='#111' stroke-width='1'/><rect x='9.6' y='11.2' width='13.4' height='10.6' fill='#fff' stroke='#111' stroke-width='1.5'/><rect x='10.3' y='11.9' width='12' height='2' fill='#8486e4'/><rect x='11.7' y='16' width='3.2' height='3.2' fill='#fff' stroke='#111' stroke-width='1.1'/><rect x='18' y='16' width='3.2' height='3.2' fill='#fff' stroke='#111' stroke-width='1.1'/><path d='M12.2 18.8 L16 15.2' stroke='#111' stroke-width='1'/></svg></div>
<div class='sep' style='left:135px;top:1100px;height:60px'></div>
<div class='btn' style='left:147px;top:1104px;width:72px;height:56px'><svg viewBox='0 0 24 24' ><path d='M2.8 3.5H5.2M4 2.3V4.7' stroke='#f00' stroke-width='0.95'/><path d='M6.3 6H8.7M7.5 4.8V7.2' stroke='#f00' stroke-width='0.95'/><path d='M3.8 7H6.2M5 5.8V8.2' stroke='#f00' stroke-width='0.95'/><path d='M14.3 5.5H16.7M15.5 4.3V6.7' stroke='#f00' stroke-width='0.95'/><path d='M8.8 10H11.2M10 8.8V11.2' stroke='#f00' stroke-width='0.95'/><path d='M1.8 13H4.2M3 11.8V14.2' stroke='#f00' stroke-width='0.95'/><path d='M7.8 12.5H10.2M9 11.3V13.7' stroke='#f00' stroke-width='0.95'/><path d='M3.3 17H5.7M4.5 15.8V18.2' stroke='#f00' stroke-width='0.95'/><path d='M6.8 18H9.2M8 16.8V19.2' stroke='#f00' stroke-width='0.95'/><path d='M4.3 21H6.7M5.5 19.8V22.2' stroke='#f00' stroke-width='0.95'/><path d='M11 1.5L12 2.5L11 3.5L10 2.5Z' fill='none' stroke='#00f' stroke-width='0.75'/><path d='M18 3.5L19 4.5L18 5.5L17 4.5Z' fill='none' stroke='#00f' stroke-width='0.75'/><path d='M16 8L17 9L16 10L15 9Z' fill='none' stroke='#00f' stroke-width='0.75'/><path d='M21 8.5L22 9.5L21 10.5L20 9.5Z' fill='none' stroke='#00f' stroke-width='0.75'/><path d='M12 12.5L13 13.5L12 14.5L11 13.5Z' fill='none' stroke='#00f' stroke-width='0.75'/><path d='M15.5 14.5L16.5 15.5L15.5 16.5L14.5 15.5Z' fill='none' stroke='#00f' stroke-width='0.75'/><path d='M6.5 15.5L7.5 16.5L6.5 17.5L5.5 16.5Z' fill='none' stroke='#00f' stroke-width='0.75'/><path d='M13.5 17.5L14.5 18.5L13.5 19.5L12.5 18.5Z' fill='none' stroke='#00f' stroke-width='0.75'/><path d='M11.5 6.5L12.5 7.5L11.5 8.5L10.5 7.5Z' fill='none' stroke='#00f' stroke-width='0.75'/><path d='M19.8 17.1h2.2v2.2h2.2v2.2h-2.2v2.2h-2.2v-2.2h-2.2v-2.2h2.2z' fill='#4ccc4c' stroke='#1c8c1c' stroke-width='0.8'/><path d='M19.8 17.1m1.1 1v4.6m-2.3 -2.3h4.6' stroke='#a4eaa4' stroke-width='0.7' fill='none'/></svg></div>
<div class='btn' style='left:219px;top:1104px;width:72px;height:56px'><svg viewBox='0 0 24 24' ><path d='M3.5 3 L13 12 M19.5 7.5 V17 M3 19.5 H13' stroke='#000' stroke-width='1.2'/><circle cx='3.5' cy='3' r='1.9' fill='#fff' stroke='#000' stroke-width='1'/><circle cx='13' cy='12' r='1.9' fill='#fff' stroke='#000' stroke-width='1'/><circle cx='19.5' cy='7.5' r='1.9' fill='#fff' stroke='#000' stroke-width='1'/><circle cx='19.5' cy='17' r='1.9' fill='#fff' stroke='#000' stroke-width='1'/><circle cx='3' cy='19.5' r='1.9' fill='#fff' stroke='#000' stroke-width='1'/><circle cx='13' cy='19.5' r='1.9' fill='#fff' stroke='#000' stroke-width='1'/><path d='M19.8 17.1h2.2v2.2h2.2v2.2h-2.2v2.2h-2.2v-2.2h-2.2v-2.2h2.2z' fill='#4ccc4c' stroke='#1c8c1c' stroke-width='0.8'/><path d='M19.8 17.1m1.1 1v4.6m-2.3 -2.3h4.6' stroke='#a4eaa4' stroke-width='0.7' fill='none'/></svg></div>
<div class='btn' style='left:291px;top:1104px;width:72px;height:56px'><svg viewBox='0 0 24 24' ><rect x='1.5' y='17.5' width='2' height='5' fill='#00f'/><rect x='5' y='9.5' width='2' height='13' fill='#00f'/><rect x='8.5' y='14.5' width='2' height='8' fill='#00f'/><rect x='8.5' y='20.5' width='5.5' height='2' fill='#00f'/><rect x='12' y='13' width='2' height='7.5' fill='#f00'/><rect x='15' y='6' width='2' height='16.5' fill='#f00'/><rect x='18.5' y='0.5' width='2' height='22' fill='#f00'/><rect x='21.5' y='11' width='2' height='8' fill='#f00'/><path d='M19.8 17.1h2.2v2.2h2.2v2.2h-2.2v2.2h-2.2v-2.2h-2.2v-2.2h2.2z' fill='#4ccc4c' stroke='#1c8c1c' stroke-width='0.8'/><path d='M19.8 17.1m1.1 1v4.6m-2.3 -2.3h4.6' stroke='#a4eaa4' stroke-width='0.7' fill='none'/></svg></div>
<div class='btn' style='left:363px;top:1104px;width:71px;height:56px'><svg viewBox='0 0 24 24' ><path d='M2.5 0.5V23.5 M1 11.5H23.5 M23.5 10V13' stroke='#000' stroke-width='1.2' fill='none'/><path d='M2.5 11.5 C4 -3 8.5 -3 11 11.5 C13.5 25 19 25 23 13' fill='none' stroke='#2020e0' stroke-width='1.2'/><path d='M19.8 17.1h2.2v2.2h2.2v2.2h-2.2v2.2h-2.2v-2.2h-2.2v-2.2h2.2z' fill='#4ccc4c' stroke='#1c8c1c' stroke-width='0.8'/><path d='M19.8 17.1m1.1 1v4.6m-2.3 -2.3h4.6' stroke='#a4eaa4' stroke-width='0.7' fill='none'/></svg></div>
<div class='sep' style='left:445px;top:1100px;height:60px'></div>
<div class='btn' style='left:457px;top:1104px;width:71px;height:56px'><svg viewBox='0 0 24 24' ><path d='M5.5 7.5 H18.5 L17.5 21.5 H6.5 Z' fill='#c89a78' stroke='#000' stroke-width='1.2'/><path d='M8.5 9V20.5 M11 9V20.5 M13.5 9V20.5 M16 9V20.5' stroke='#000' stroke-width='1'/><rect x='4' y='4.5' width='16' height='3' rx='0.8' fill='#222'/><path d='M9.5 4.5 V2.5 H14.5 V4.5' fill='none' stroke='#000' stroke-width='1.2'/><path d='M6.3 9 L7 20.5' stroke='#e8c8b0' stroke-width='0.8'/></svg></div>
<div class='a' style='left:26px;top:1174px;width:1777px;height:451px;border:2px solid #8e8e8e'></div>
<div class='a' style='left:29px;top:1178px;width:237px;height:443px;background:#fff;border:2px solid #e2e2e2;border-top-color:#fff;border-left-color:#fff'></div>
<div class='ico' style='left:31px;top:1180px;width:48px;height:48px'><svg viewBox='0 0 24 24' ><rect x='3.5' y='1' width='19.5' height='20' fill='#fff' stroke='#000' stroke-width='1.4'/><path d='M3.5 6.5H23' stroke='#000' stroke-width='1.2'/><text x='13.2' y='5.4' text-anchor='middle' font-family="'Liberation Sans','DejaVu Sans',sans-serif" font-weight='bold' font-size='4.6' textLength='15' lengthAdjust='spacingAndGlyphs' fill='#000'>TITLE</text><path d='M2.8 0.5V22 M0.5 3H3 M0.5 20H3 M4 22.5H23.5 M5.5 22V24 M22 22V24' stroke='#000' stroke-width='1.5' fill='none'/></svg></div>
<div class='t' style='left:88px;top:1192px;font-size:25px;letter-spacing:-1.701px;'>Frame</div>
<div class='ico' style='left:31px;top:1232px;width:48px;height:48px'><svg viewBox='0 0 24 24' ><rect x='0.7' y='0.7' width='22.6' height='22.6' fill='#ebebeb' stroke='#444' stroke-width='1.2'/><circle cx='6.5' cy='5.5' r='2.2' fill='none' stroke='#f00' stroke-width='1.1'/><path d='M4 12H9M6.5 9.5V14.5' stroke='#00f' stroke-width='1.1'/><path d='M4.3 16.5L8.7 21M8.7 16.5L4.3 21' stroke='#00a000' stroke-width='1.1'/><text x='16.8' y='7.6' text-anchor='middle' font-family="'Liberation Mono','DejaVu Sans Mono',monospace" font-size='6.6' fill='#000'>Aa</text><text x='16.8' y='14.4' text-anchor='middle' font-family="'Liberation Mono','DejaVu Sans Mono',monospace" font-size='6.6' fill='#000'>Bb</text><text x='16.8' y='21.2' text-anchor='middle' font-family="'Liberation Mono','DejaVu Sans Mono',monospace" font-size='6.6' fill='#000'>Cc</text></svg></div>
<div class='t' style='left:88px;top:1244px;font-size:25px;letter-spacing:-1.807px;'>Legend</div>
<div class='ico' style='left:31px;top:1284px;width:48px;height:48px'><svg viewBox='0 0 24 24' ><rect x='6' y='0.8' width='16.5' height='16.2' fill='#ececec'/><path d='M10 1V17 M14 1V17 M18 1V17 M22 1V17 M6 4.5H22.5 M6 8.5H22.5 M6 12.5H22.5' stroke='#999' stroke-width='0.8' fill='none'/><path d='M6 0.5V17H23' stroke='#000' stroke-width='1.7' fill='none'/><text x='14' y='23.6' text-anchor='middle' font-family="'Liberation Sans','DejaVu Sans',sans-serif" font-size='5.6' fill='#000'>Xxx</text><text transform='translate(4 10) rotate(-90)' text-anchor='middle' font-family="'Liberation Sans','DejaVu Sans',sans-serif" font-size='5.6' fill='#000'>Yyy</text></svg></div>
<div class='t' style='left:88px;top:1296px;font-size:25px;letter-spacing:-1.487px;'>Axes</div>
<div class='ico' style='left:31px;top:1336px;width:48px;height:48px'><svg viewBox='0 0 24 24' ><rect x='0' y='1.8' width='24' height='19.2' fill='#cfcfcf'/><text x='0' y='9.5' font-family="'Liberation Sans','DejaVu Sans',sans-serif" font-size='8.5' fill='#000'>&gt;</text><text x='0' y='19' font-family="'Liberation Sans','DejaVu Sans',sans-serif" font-size='8.5' textLength='23.5' lengthAdjust='spacingAndGlyphs' fill='#000'>&gt;stilts</text></svg></div>
<div class='t' style='left:88px;top:1348px;font-size:25px;letter-spacing:-1.107px;'>STILTS</div>
<div class='a' style='left:30px;top:1386px;width:234px;height:2px;background:#c0c0c0'></div>
<div class='a' style='left:33px;top:1391px;width:228px;height:55px;background:#c9c9c9;overflow:hidden'><div class='ico' style='left:2px;top:8px;width:22px;height:40px'><svg viewBox='0 0 11 20' style='width:22px;height:40px;margin:-20px 0 0 -11px'><path d='M5.5 0.5 L10.5 6 H0.5Z M5.5 19.5 L10.5 14 H0.5Z M3 6H8V14H3Z' fill='#222'/><path d='M2 8H9M2 10H9M2 12H9' stroke='#c9c9c9' stroke-width='0.8'/></svg></div><div class='a' style='left:38px;top:15px;width:28px;height:28px;border-radius:6px;background:#3b8ff7'><svg viewBox='0 0 28 28' width='28' height='28'><path d='M7 15l5 6 9-14' fill='none' stroke='#fff' stroke-width='3.4' stroke-linecap='round' stroke-linejoin='round'/></svg></div><div class='ico' style='left:80px;top:4px;width:48px;height:48px'><svg viewBox='0 0 24 24' ><path d='M2.8 3.5H5.2M4 2.3V4.7' stroke='#f00' stroke-width='0.95'/><path d='M6.3 6H8.7M7.5 4.8V7.2' stroke='#f00' stroke-width='0.95'/><path d='M3.8 7H6.2M5 5.8V8.2' stroke='#f00' stroke-width='0.95'/><path d='M14.3 5.5H16.7M15.5 4.3V6.7' stroke='#f00' stroke-width='0.95'/><path d='M8.8 10H11.2M10 8.8V11.2' stroke='#f00' stroke-width='0.95'/><path d='M1.8 13H4.2M3 11.8V14.2' stroke='#f00' stroke-width='0.95'/><path d='M7.8 12.5H10.2M9 11.3V13.7' stroke='#f00' stroke-width='0.95'/><path d='M3.3 17H5.7M4.5 15.8V18.2' stroke='#f00' stroke-width='0.95'/><path d='M6.8 18H9.2M8 16.8V19.2' stroke='#f00' stroke-width='0.95'/><path d='M4.3 21H6.7M5.5 19.8V22.2' stroke='#f00' stroke-width='0.95'/><path d='M11 1.5L12 2.5L11 3.5L10 2.5Z' fill='none' stroke='#00f' stroke-width='0.75'/><path d='M18 3.5L19 4.5L18 5.5L17 4.5Z' fill='none' stroke='#00f' stroke-width='0.75'/><path d='M16 8L17 9L16 10L15 9Z' fill='none' stroke='#00f' stroke-width='0.75'/><path d='M21 8.5L22 9.5L21 10.5L20 9.5Z' fill='none' stroke='#00f' stroke-width='0.75'/><path d='M12 12.5L13 13.5L12 14.5L11 13.5Z' fill='none' stroke='#00f' stroke-width='0.75'/><path d='M15.5 14.5L16.5 15.5L15.5 16.5L14.5 15.5Z' fill='none' stroke='#00f' stroke-width='0.75'/><path d='M6.5 15.5L7.5 16.5L6.5 17.5L5.5 16.5Z' fill='none' stroke='#00f' stroke-width='0.75'/><path d='M13.5 17.5L14.5 18.5L13.5 19.5L12.5 18.5Z' fill='none' stroke='#00f' stroke-width='0.75'/><path d='M11.5 6.5L12.5 7.5L11.5 8.5L10.5 7.5Z' fill='none' stroke='#00f' stroke-width='0.75'/><path d='M17.8 13H20.2M19 11.8V14.2' stroke='#f00' stroke-width='0.95'/><path d='M19.5 17L20.5 18L19.5 19L18.5 18Z' fill='none' stroke='#00f' stroke-width='0.75'/><path d='M17 20L18 21L17 22L16 21Z' fill='none' stroke='#00f' stroke-width='0.75'/></svg></div><div class='t' style='left:138px;top:16px;font-size:25px;letter-spacing:-1.104px;'>1: cscres</div></div>
<div class='a' style='left:266px;top:1178px;width:18px;height:443px;background:#ededed'></div>
<div class='a' style='left:265px;top:1390px;width:18px;height:20px;background:#fff'></div><div class='a' style='left:268px;top:1394px;width:12px;height:12px;border-radius:50%;background:#d2d2d2'></div>
<div class='a' style='left:299px;top:1211px;width:1482px;height:387px;background:#e4e4e4;border-radius:8px;border:2px solid #e0e0e0'></div>
<div class='a' style='left:305px;top:1245px;width:1470px;height:348px;background:#ededed'></div>
<div class='a' style='left:843px;top:1185.5px;width:394px;height:41px;background:#fff;border:2px solid #cfcfcf;border-radius:9px;box-shadow:0 1px 1px rgba(0,0,0,.2);overflow:hidden'><div class='a' style='left:141px;top:0;width:2px;height:40px;background:#dcdcdc'></div><div class='a' style='left:285px;top:0;width:109px;height:40px;background:#e2e2e2;border-left:2px solid #d0d0d0'></div><div class='t' style='left:18.4px;top:6.5px;font-size:25px;letter-spacing:0.407px;'>Position</div><div class='t' style='left:166px;top:6.5px;font-size:25px;letter-spacing:-0.318px;'>Subsets</div><div class='t' style='left:311px;top:6.5px;font-size:25px;letter-spacing:-0.496px;color:#c3c3c3;text-shadow:0 1px 0 #fff;'>Form</div></div>
<div class='a' style='left:320px;top:1261px;width:194px;height:66px;background:#fff;border:2px solid #d2d2d2;border-radius:10px;box-shadow:0 1px 1px rgba(0,0,0,.15)'><div class='a' style='left:37px;top:11px;width:41px;height:41px'><svg width='41' height='41' viewBox='0 0 24 24' ><path d='M8.5 1.5H15.5V8.5H22.5V15.5H15.5V22.5H8.5V15.5H1.5V8.5H8.5Z' fill='#1fa01f' stroke='#0c300c' stroke-width='1.6' stroke-linejoin='round'/><path d='M9.8 3V9.8H3' fill='none' stroke='#6ad86a' stroke-width='1'/></svg></div><div class='t' style='left:91px;top:21px;font-size:22.5px;letter-spacing:-0.681px;'>Forms</div></div>
<div class='a' style='left:315px;top:1339px;width:208px;height:245px;background:#fff;border:2px solid #c6c6c6'></div>
<div class='a' style='left:319px;top:1343px;width:200px;height:55px;background:#c9c9c9;overflow:hidden'><div class='ico' style='left:2px;top:8px;width:22px;height:40px'><svg viewBox='0 0 11 20' style='width:22px;height:40px;margin:-20px 0 0 -11px'><path d='M5.5 0.5 L10.5 6 H0.5Z M5.5 19.5 L10.5 14 H0.5Z M3 6H8V14H3Z' fill='#222'/><path d='M2 8H9M2 10H9M2 12H9' stroke='#c9c9c9' stroke-width='0.8'/></svg></div><div class='a' style='left:38px;top:15px;width:28px;height:28px;border-radius:6px;background:#3b8ff7'><svg viewBox='0 0 28 28' width='28' height='28'><path d='M7 15l5 6 9-14' fill='none' stroke='#fff' stroke-width='3.4' stroke-linecap='round' stroke-linejoin='round'/></svg></div><div class='a' style='left:98px;top:21px;width:12px;height:12px;border-radius:50%;background:#e60000'></div><div class='t' style='left:137px;top:16px;font-size:25px;letter-spacing:-0.714px;'>Mark</div></div>
<div class='t' style='left:341px;top:1433.0px;font-size:22.5px;letter-spacing:0.311px;color:#bbbbbb;'>Add layers</div>
<div class='t' style='left:341px;top:1462.5px;font-size:22.5px;letter-spacing:-0.387px;color:#bbbbbb;'>using &quot;Forms&quot;</div>
<div class='t' style='left:341px;top:1492.0px;font-size:22.5px;letter-spacing:-0.005px;color:#bbbbbb;'>button above</div>
<div class='a' style='left:523px;top:1255px;width:1244px;height:329px;border:2px solid #dcdcdc;border-top-color:#b6b6b6;border-left-color:#d2d2d2;overflow:hidden'>
<div class='grp' style='left:6px;top:17px;width:1199px;height:90px'></div><div class='t' style='left:18px;top:6px;font-size:25px;letter-spacing:-0.509px;background:#ededed;padding:0 4px;margin-left:-4px;'>Shading</div>
<div class='t' style='left:13px;top:52px;font-size:25px;letter-spacing:-0.549px;'>Mode:</div>
<div class='combo' style='left:105px;top:43px;width:276px;height:39px;background:#fff'><div class='ico' style='left:18px;top:-6px;width:48px;height:48px'><svg viewBox='0 0 24 24' ><path d='M7 3h2v1h3V3h3v2h2v3h1v6h-1v3h-2v2h-3v2h-2v-2H8v-2H6v-3H5V8h1V5h1z' fill='#e00000'/><rect x='5' y='3' width='2' height='2' fill='#e00000'/><circle cx='11.5' cy='11' r='4' fill='#900000'/><circle cx='11.5' cy='11' r='1.8' fill='#500000'/></svg></div><div class='t' style='left:72px;top:6px;font-size:25px;letter-spacing:-0.391px;'>auto</div><svg class='ar' viewBox='0 0 18 28'><path d='M3 10 L9 4 L15 10 M3 18 L9 24 L15 18' fill='none' stroke='#555' stroke-width='2.6' stroke-linecap='round' stroke-linejoin='round'/></svg></div>
<div class='sm' style='left:407px;top:44px;width:28px;height:40px;background:#fff'><svg class='a' style='left:50%;top:50%;margin:-13px 0 0 -9px' width='18' height='26' viewBox='0 0 18 26'><path d='M13 4 L4 13 L13 22 Z' fill='#000'/></svg></div>
<div class='sm' style='left:445px;top:44px;width:28px;height:40px;background:#fff'><svg class='a' style='left:50%;top:50%;margin:-13px 0 0 -9px' width='18' height='26' viewBox='0 0 18 26'><path d='M5 4 L14 13 L5 22 Z' fill='#000'/></svg></div>
<div class='grp' style='left:6px;top:127px;width:1199px;height:300px'></div><div class='t' style='left:18px;top:116px;font-size:25px;letter-spacing:-0.292px;background:#ededed;padding:0 4px;margin-left:-4px;'>Global Style</div>
<div class='t' style='left:13px;top:162px;font-size:25px;letter-spacing:-1.186px;'>Shape:</div>
<div class='combo' style='left:119px;top:153px;width:132px;height:39px;background:#fff'><div class='a' style='left:26px;top:7px;width:21px;height:21px;border-radius:50%;background:#000'></div><svg class='ar' viewBox='0 0 18 28'><path d='M3 10 L9 4 L15 10 M3 18 L9 24 L15 18' fill='none' stroke='#555' stroke-width='2.6' stroke-linecap='round' stroke-linejoin='round'/></svg></div>
<div class='sm' style='left:277px;top:154px;width:28px;height:40px;background:#fff'><svg class='a' style='left:50%;top:50%;margin:-13px 0 0 -9px' width='18' height='26' viewBox='0 0 18 26'><path d='M13 4 L4 13 L13 22 Z' fill='#000'/></svg></div>
<div class='sm' style='left:315px;top:154px;width:28px;height:40px;background:#fff'><svg class='a' style='left:50%;top:50%;margin:-13px 0 0 -9px' width='18' height='26' viewBox='0 0 18 26'><path d='M5 4 L14 13 L5 22 Z' fill='#000'/></svg></div>
<div class='t' style='left:36px;top:223px;font-size:25px;letter-spacing:-0.670px;'>Size:</div>
<div class='combo' style='left:119px;top:215px;width:140px;height:39px;background:#fff'><div class='a' style='left:30px;top:11px;width:14px;height:14px;border:2px solid #000'></div><div class='t' style='left:65px;top:6px;font-size:25px;'>3</div><svg class='ar' viewBox='0 0 18 28'><path d='M3 10 L9 4 L15 10 M3 18 L9 24 L15 18' fill='none' stroke='#555' stroke-width='2.6' stroke-linecap='round' stroke-linejoin='round'/></svg></div>
<div class='sm' style='left:285px;top:216px;width:28px;height:40px;background:#fff'><svg class='a' style='left:50%;top:50%;margin:-13px 0 0 -9px' width='18' height='26' viewBox='0 0 18 26'><path d='M13 4 L4 13 L13 22 Z' fill='#000'/></svg></div>
<div class='sm' style='left:323px;top:216px;width:28px;height:40px;background:#fff'><svg class='a' style='left:50%;top:50%;margin:-13px 0 0 -9px' width='18' height='26' viewBox='0 0 18 26'><path d='M5 4 L14 13 L5 22 Z' fill='#000'/></svg></div>
<div class='t' style='left:19px;top:289px;font-size:25px;letter-spacing:0.039px;'>Color:</div>
<div class='combo' style='left:119px;top:279px;width:140px;height:39px;background:#f4f4f4'><div class='a' style='left:16px;top:5px;width:48px;height:24px;background:#c0c0c0'></div><svg class='ar' viewBox='0 0 18 28'><path d='M3 10 L9 4 L15 10 M3 18 L9 24 L15 18' fill='none' stroke='#bbb' stroke-width='2.6' stroke-linecap='round' stroke-linejoin='round'/></svg></div>
<div class='sm' style='left:285px;top:280px;width:28px;height:40px;background:#f4f4f4'><svg class='a' style='left:50%;top:50%;margin:-13px 0 0 -9px' width='18' height='26' viewBox='0 0 18 26'><path d='M13 4 L4 13 L13 22 Z' fill='#999'/></svg></div>
<div class='sm' style='left:323px;top:280px;width:28px;height:40px;background:#f4f4f4'><svg class='a' style='left:50%;top:50%;margin:-13px 0 0 -9px' width='18' height='26' viewBox='0 0 18 26'><path d='M5 4 L14 13 L5 22 Z' fill='#999'/></svg></div>
<div class='sm' style='left:381px;top:278px;width:50px;height:46px;background:#f2f2f2'><div class='a' style='left:6px;top:4px;width:36px;height:36px;border-radius:50%;background:conic-gradient(#9a9a9a,#b5b5b5,#8c8c8c,#a9a9a9,#9a9a9a)'></div></div>
<div class='a' style='left:450px;top:290px;width:27px;height:27px;border-radius:5px;background:#fff;border:2px solid #c9c9c9'><svg viewBox='0 0 24 24' width='23' height='23'><path d='M5 12l5 7 9-14' fill='none' stroke='#3a3a3a' stroke-width='2.8' stroke-linecap='round' stroke-linejoin='round'/></svg></div>
<div class='t' style='left:490px;top:291px;font-size:25px;letter-spacing:-0.743px;'>By Subset</div>
<div class='a' style='left:1208px;top:0;width:32px;height:330px;background:#fafafa;border-left:2px solid #e8e8e8'></div>
<div class='a' style='left:1216px;top:3px;width:16px;height:230px;border-radius:8px;background:#c1c1c1'></div>
</div>
<div class='a' style='left:21px;top:1639px;width:884px;height:36px;border:2px solid #b3b3b3'></div>
<div class='t' style='left:26px;top:1646px;font-size:25px;letter-spacing:0.282px;'>Position:</div>
<div class='a' style='left:917px;top:1639px;width:885px;height:36px;border:2px solid #b3b3b3'></div>
<div class='t' style='left:922px;top:1646px;font-size:25px;letter-spacing:0.442px;'>Count: 9 / 53</div>
<div class='btn' style='left:21px;top:1679px;width:42px;height:41px;border-color:#b9b9b9'><svg viewBox='0 0 24 24' style='width:24px;height:24px;margin:-12px 0 0 -12px'><path d='M4 4L20 20M20 4L4 20' stroke='#111' stroke-width='4.5'/></svg></div>
<div class='btn' style='left:73px;top:1679px;width:42px;height:41px;border-color:#b9b9b9'><div class='t mac' style='left:0;width:38px;text-align:center;top:5px;font-size:26px;font-weight:normal'>?</div></div>
<div class='ico' style='left:133px;top:1688px;width:34px;height:24px'><svg viewBox='0 0 17 12' style='width:34px;height:24px;margin:-12px 0 0 -17px'><rect x='0.5' y='0.5' width='16' height='11' rx='1.5' fill='#8c8c8c' stroke='#777' stroke-width='0.8'/><rect x='2' y='2' width='5.5' height='8' fill='#b5b5b5'/><rect x='8.5' y='2' width='6.5' height='2' fill='#b5b5b5'/><rect x='8.5' y='5' width='6.5' height='2' fill='#b5b5b5'/><rect x='8.5' y='8' width='6.5' height='2' fill='#b5b5b5'/></svg></div>
<div class='t' style='left:175px;top:1688px;font-size:25px;letter-spacing:-0.604px;color:#8e8e8e;'>Select</div>
<div class='a' style='left:4px;top:1741px;width:1818px;height:11px;border-radius:6px;background:#dedede;border:1px solid #d3d3d3'></div>
</div>
</div></body></html>
